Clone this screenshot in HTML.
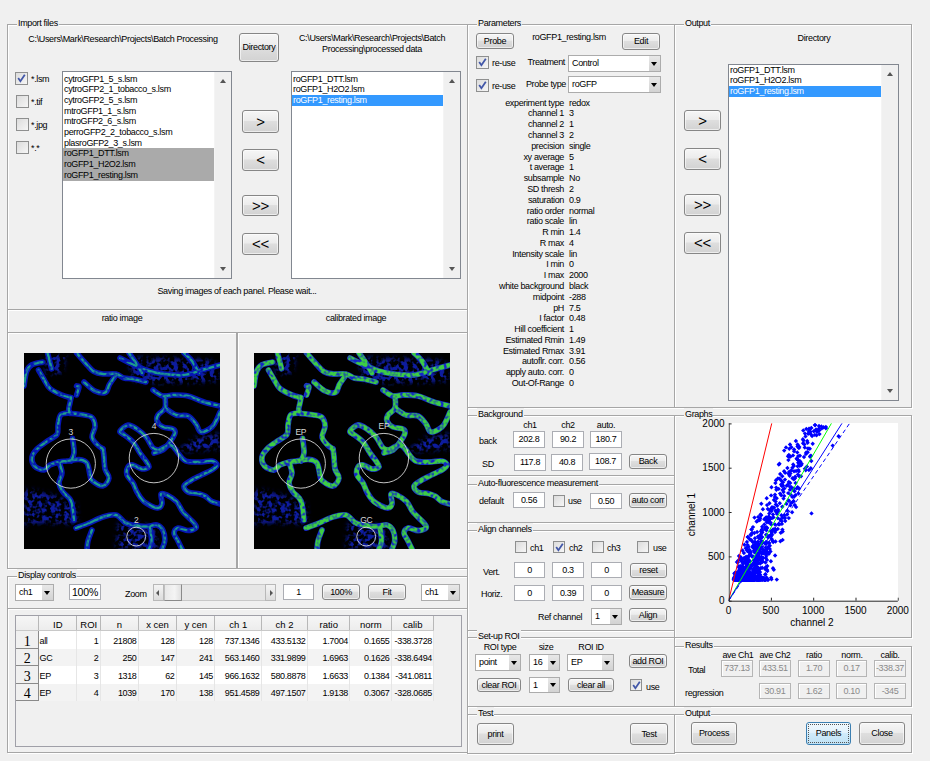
<!DOCTYPE html>
<html><head><meta charset="utf-8"><style>
*{margin:0;padding:0;box-sizing:border-box}
html,body{width:930px;height:761px;overflow:hidden;background:#f0f0f0}
body{position:relative;font-family:"Liberation Sans",sans-serif;font-size:9px;letter-spacing:-0.35px;color:#000}
div{position:absolute}
.t{white-space:pre;line-height:10px}
.fr{border:1px solid #a6a6a6;box-shadow:inset 1px 1px 0 #fff, 1px 1px 0 #fff}
.ft{background:#f0f0f0;padding:0 1px;line-height:12px;white-space:pre}
.btn{border:1px solid #868686;border-radius:3px;background:linear-gradient(#f6f6f6 0%,#ececec 45%,#dedede 50%,#d2d2d2 100%);text-align:center;white-space:pre;box-shadow:inset 0 0 0 1px rgba(255,255,255,.6)}
.btnf{border:1px solid #3c7fb1;border-radius:3px;background:linear-gradient(#f0f8fd 0%,#e2f2fc 45%,#d0ebfa 50%,#c0e2f5 100%);text-align:center;white-space:pre;outline:1px dotted #555;outline-offset:-3px}
.ed{border:1px solid #abadb3;background:#fff;white-space:pre}
.edd{border:1px solid #b5b5b5;background:#f0f0f0;color:#8a8a8a;white-space:pre;box-shadow:inset 1px 1px 0 #fff}
.pp{border:1px solid #acacac;background:#fff;white-space:pre}
.pa{right:0;top:0;bottom:0;width:11px;background:linear-gradient(#e8e8e8,#d2d2d2)}
.tri{left:2px;top:50%;margin-top:-2px;width:0;height:0;border-left:3.5px solid transparent;border-right:3.5px solid transparent;border-top:4px solid #000}
.cb{border:1px solid #8e8f8f;background:linear-gradient(135deg,#dcdcdc,#f6f6f6)}
.lb{border:1px solid #828790;background:#fff;overflow:hidden}
.li{left:0;height:11px;line-height:10px;padding-left:1px;white-space:pre}
.sb{background:#f0f0f0;border-left:1px solid #f4f4f4}
.tru{width:0;height:0;border-left:3.5px solid transparent;border-right:3.5px solid transparent;border-bottom:4px solid #555}
.trd{width:0;height:0;border-left:3.5px solid transparent;border-right:3.5px solid transparent;border-top:4px solid #555}
</style></head>
<body>
<div class="fr" style="left:7px;top:24px;width:461px;height:286px"></div>
<div class="ft" style="left:17px;top:17px">Import files</div>
<div class="t" style="top:34px;left:-27px;width:300px;text-align:center;">C:\Users\Mark\Research\Projects\Batch Processing</div>
<div class="btn" style="left:239px;top:33px;width:40px;height:29px;line-height:27px;">Directory</div>
<div class="t" style="top:33px;left:222px;width:300px;text-align:center;">C:\Users\Mark\Research\Projects\Batch</div>
<div class="t" style="top:44px;left:222px;width:300px;text-align:center;">Processing\processed data</div>
<div class="cb" style="left:15px;top:72px;width:13px;height:13px"><svg width="13" height="13" style="position:absolute;left:-1px;top:-1px" viewBox="0 0 13 13"><path d="M3.2 6 L5.4 9.2 L9.8 2.8" stroke="#4257a8" stroke-width="1.8" fill="none"/></svg></div>
<div class="t" style="top:74px;left:31px;">*.lsm</div>
<div class="cb" style="left:16px;top:95px;width:13px;height:13px"></div>
<div class="t" style="top:97px;left:31px;">*.tif</div>
<div class="cb" style="left:16px;top:118px;width:13px;height:13px"></div>
<div class="t" style="top:120px;left:31px;">*.jpg</div>
<div class="cb" style="left:16px;top:141px;width:13px;height:13px"></div>
<div class="t" style="top:143px;left:31px;">*.*</div>
<div class="lb" style="left:62px;top:71px;width:170px;height:208px">
<div class="li" style="top:1.50px;width:151px">cytroGFP1_5_s.lsm</div>
<div class="li" style="top:12.19px;width:151px">cytroGFP2_1_tobacco_s.lsm</div>
<div class="li" style="top:22.88px;width:151px">cytroGFP2_5_s.lsm</div>
<div class="li" style="top:33.57px;width:151px">mtroGFP1_1_s.lsm</div>
<div class="li" style="top:44.26px;width:151px">mtroGFP2_6_s.lsm</div>
<div class="li" style="top:54.95px;width:151px">perroGFP2_2_tobacco_s.lsm</div>
<div class="li" style="top:65.64px;width:151px">plasroGFP2_3_s.lsm</div>
<div class="li" style="top:76.33px;width:151px;background:#aaaaaa;color:#000">roGFP1_DTT.lsm</div>
<div class="li" style="top:87.02px;width:151px;background:#aaaaaa;color:#000">roGFP1_H2O2.lsm</div>
<div class="li" style="top:97.71px;width:151px;background:#aaaaaa;color:#000">roGFP1_resting.lsm</div>
<div class="sb" style="left:151px;top:0;width:17px;height:206px"><div class="tru" style="left:5px;top:7px"></div><div class="trd" style="left:5px;top:195px"></div></div>
</div>
<div class="btn" style="left:242px;top:110px;width:37px;height:23px;line-height:21px;font-size:15px;">&gt;</div>
<div class="btn" style="left:242px;top:149px;width:37px;height:22px;line-height:20px;font-size:15px;">&lt;</div>
<div class="btn" style="left:242px;top:195px;width:37px;height:21px;line-height:19px;font-size:15px;">&gt;&gt;</div>
<div class="btn" style="left:242px;top:233px;width:37px;height:22px;line-height:20px;font-size:15px;">&lt;&lt;</div>
<div class="lb" style="left:291px;top:71px;width:170px;height:208px">
<div class="li" style="top:1.50px;width:151px">roGFP1_DTT.lsm</div>
<div class="li" style="top:12.19px;width:151px">roGFP1_H2O2.lsm</div>
<div class="li" style="top:22.88px;width:151px;background:#3399ff;color:#fff">roGFP1_resting.lsm</div>
<div class="sb" style="left:151px;top:0;width:17px;height:206px"><div class="tru" style="left:5px;top:7px"></div><div class="trd" style="left:5px;top:195px"></div></div>
</div>
<div class="t" style="top:286px;left:87px;width:300px;text-align:center;">Saving images of each panel. Please wait...</div>
<div class="fr" style="left:7px;top:309px;width:461px;height:24px"></div>
<div class="t" style="top:313px;left:-28px;width:300px;text-align:center;">ratio image</div>
<div class="t" style="top:313px;left:206px;width:300px;text-align:center;">calibrated image</div>
<div class="fr" style="left:7px;top:332px;width:230px;height:237px"></div>
<div class="fr" style="left:237px;top:332px;width:231px;height:237px"></div>
<svg style="position:absolute;left:24px;top:353px" width="196" height="196" viewBox="0 0 196 196"><defs><filter id="f1" x="0" y="0" width="196" height="196" filterUnits="userSpaceOnUse"><feTurbulence type="fractalNoise" baseFrequency="0.22" numOctaves="2" seed="4" result="n"/><feColorMatrix in="n" type="matrix" values="0 0 0 0 0  0 0 0 0 0  0 0 0 0 0  0 0 0 5 -2.15" result="m"/><feGaussianBlur in="SourceGraphic" stdDeviation="2.5" result="bl"/><feComposite in="bl" in2="m" operator="in"/></filter><filter id="f1b" x="0" y="0" width="196" height="196" filterUnits="userSpaceOnUse"><feTurbulence type="fractalNoise" baseFrequency="0.3" numOctaves="1" seed="9" result="n"/><feColorMatrix in="n" type="matrix" values="0 0 0 0 0  0 0 0 0 0  0 0 0 0 0  0 0 0 4 -1.2" result="m"/><feComposite in="SourceGraphic" in2="m" operator="in"/></filter></defs><rect width="196" height="196" fill="#000"/><g fill="#0e1aa0" filter="url(#f1)"><path d="M0,136 C20,138 40,146 52,150 L54,170 C35,172 15,168 0,172 Z"/><path d="M104,4 C130,6 160,4 190,8 L196,28 C170,30 130,32 108,28 Z"/><path d="M94,170 C105,168 125,170 132,176 L134,196 L92,196 Z"/><path d="M20,0 L42,0 L38,20 L22,22 Z"/><path d="M150,100 L196,96 L196,80 L170,85 Z"/></g><g stroke="#0616b4" stroke-width="5.6" fill="none" stroke-linecap="round" stroke-linejoin="round"><path d="M0,33 C0.4,30.6 1.3,21.9 2.6,18.4 C3.9,14.9 5.3,13.3 7.9,11.8 C10.5,10.3 16.6,9.6 18.4,9.2"/><path d="M23.6,0 C24.3,2.6 26.9,13.2 27.6,15.8"/><path d="M14.5,17 C15.4,18.5 17.8,22.9 19.7,26 C21.6,29.1 22.9,32.8 26,35.5 C29.1,38.2 34.5,40.5 38,42 C41.5,43.5 45.5,44.2 47,44.7"/><path d="M52.6,0 C54.1,1.8 59.0,7.4 61.8,10.5 C64.6,13.6 66.8,16.6 69.6,18.4 C72.4,20.1 75.1,20.6 78.8,21 C82.5,21.4 88.5,20.3 92,21 C95.5,21.7 97.2,24.2 100,25 C102.8,25.8 105.3,25.3 109,26 C112.7,26.7 119.8,28.5 122,29"/><path d="M60,29 C61.8,30.5 67.4,36.3 71,38 C74.6,39.7 79.1,40.5 81.5,39.4 C83.9,38.3 83.7,34.4 85.4,31.5 C87.2,28.6 90.9,23.6 92,22"/><path d="M47,44.7 C46.8,45.6 46.4,48.0 46,50 C45.6,52.0 44.7,54.8 44.7,56.5 C44.7,58.2 45.8,59.4 46,60"/><path d="M52.6,32.9 C53.0,33.1 55.0,32.5 55,34 C55.0,35.5 53.0,40.7 52.6,42"/><path d="M46,60 C44.5,60.3 38.8,59.8 36.8,61.8 C34.8,63.8 34.6,68.7 34,72 C33.4,75.3 34.9,78.7 32.9,81.5 C30.9,84.3 25.3,86.6 22,89 C18.7,91.4 15.3,93.5 13,96 C10.7,98.5 8.4,101.2 8,104 C7.6,106.8 8.5,110.8 10.5,113 C12.5,115.2 17.4,117.2 20,117 C22.6,116.8 23.5,113.3 26,112 C28.5,110.7 32.2,109.7 35,109 C37.8,108.3 39.7,108.4 43,108 C46.3,107.6 51.7,106.2 55,106.5 C58.3,106.8 61.2,107.4 63,110 C64.8,112.6 65.2,119.1 66,122 C66.8,124.9 65.8,125.7 68,127.5 C70.2,129.3 76.2,133.4 79,133 C81.8,132.6 84.7,127.8 85,125 C85.3,122.2 81.8,119.5 81,116 C80.2,112.5 80.3,107.3 80,104 C79.7,100.7 79.2,97.3 79,96"/><path d="M46,60.4 C48.2,60.6 55.3,61.1 59,61.8 C62.7,62.5 66.0,62.4 68,64.4 C70.0,66.4 71.0,70.3 71,73.6 C71.0,76.9 67.6,80.9 68,84 C68.4,87.1 71.8,90.0 73.6,92 C75.4,94.0 78.1,95.3 79,96"/><path d="M48.6,85.4 C48.8,87.8 50.3,96.2 50,100 C49.7,103.8 47.5,106.7 47,108"/><path d="M35,109 C35.5,110.8 38.0,116.5 38,120 C38.0,123.5 34.8,126.8 35,130 C35.2,133.2 37.0,136.0 39,139 C41.0,142.0 45.2,143.3 47,148 C48.8,152.7 49.5,163.8 50,167"/><path d="M52,175 C53.8,174.3 58.5,172.8 63,171 C67.5,169.2 74.2,165.5 79,164 C83.8,162.5 88.3,161.1 92,162 C95.7,162.9 98.2,167.9 101,169.6 C103.8,171.3 105.5,171.3 109,172 C112.5,172.7 118.0,173.5 122,173.5 C126.0,173.5 130.2,171.3 133,172 C135.8,172.7 137.7,174.8 139,177.5 C140.3,180.2 140.9,184.9 140.7,188 C140.5,191.1 138.4,194.7 138,196"/><path d="M68,177 C67.3,178.8 64.8,184.8 64,188 C63.2,191.2 63.2,194.7 63,196"/><path d="M126,175 C126.2,177.2 127.7,184.5 127.5,188 C127.3,191.5 125.4,194.7 125,196"/><path d="M129,37 C130.7,38.0 135.7,42.2 139,43 C142.3,43.8 144.8,42.0 149,42 C153.2,42.0 158.8,41.8 164,43 C169.2,44.2 174.7,47.3 180,49 C185.3,50.7 193.3,52.3 196,53"/><path d="M141,43 C141.0,45.0 142.2,51.8 141,55 C139.8,58.2 135.3,59.8 134,62 C132.7,64.2 132.2,66.0 133,68 C133.8,70.0 136.3,72.7 139,74 C141.7,75.3 147.0,75.0 149,76 C151.0,77.0 151.5,77.8 151,80 C150.5,82.2 148.0,86.2 146,89 C144.0,91.8 141.7,95.2 139,97 C136.3,98.8 131.5,99.5 130,100"/><path d="M141,55 C142.8,56.2 148.2,60.7 152,62 C155.8,63.3 160.7,61.5 164,63 C167.3,64.5 169.8,68.3 172,71 C174.2,73.7 174.3,78.5 177,79 C179.7,79.5 185.3,76.2 188,74 C190.7,71.8 191.7,68.5 193,66 C194.3,63.5 195.5,60.2 196,59"/><path d="M99,81 C98.5,80.5 95.2,79.5 96,78 C96.8,76.5 101.2,72.3 104,72 C106.8,71.7 110.0,74.0 113,76 C116.0,78.0 119.3,80.8 122,84 C124.7,87.2 126.8,92.8 129,95 C131.2,97.2 134.0,96.7 135,97"/><path d="M99,81 C100.7,82.3 106.2,85.8 109,89 C111.8,92.2 113.8,96.8 116,100 C118.2,103.2 120.5,105.7 122,108 C123.5,110.3 125.7,112.7 125,114 C124.3,115.3 120.7,116.3 118,116 C115.3,115.7 111.3,112.3 109,112 C106.7,111.7 105.0,112.3 104,114 C103.0,115.7 102.2,119.3 103,122 C103.8,124.7 107.3,127.2 109,130 C110.7,132.8 111.2,135.9 113,139 C114.8,142.1 116.7,145.9 120,148.6 C123.3,151.3 130.0,154.6 133,155 C136.0,155.4 137.3,153.3 138,151 C138.7,148.7 136.2,142.5 137,141 C137.8,139.5 140.4,140.7 143,142 C145.6,143.3 149.8,145.8 152.5,148.6 C155.2,151.4 156.2,155.5 159,159 C161.8,162.5 167.4,166.9 169.6,169.6 C171.8,172.3 172.9,173.7 172,175 C171.1,176.3 167.0,177.5 164,177.5 C161.0,177.5 156.3,174.6 154,175 C151.7,175.4 150.0,177.8 150,180 C150.0,182.2 152.7,185.3 154,188 C155.3,190.7 157.3,194.7 158,196"/><path d="M135,97 C136.8,96.2 143.2,92.0 146,92 C148.8,92.0 150.7,95.7 152,97 C153.3,98.3 152.4,98.2 154,100 C155.6,101.8 158.2,106.5 161.7,108 C165.2,109.5 170.6,109.0 175,109 C179.4,109.0 185.0,107.5 188,108 C191.0,108.5 193.0,110.5 193,112 C193.0,113.5 190.6,115.3 188,117 C185.4,118.7 181.0,120.2 177.5,122 C174.0,123.8 169.9,125.7 167,127.5 C164.1,129.3 160.5,131.1 160,133 C159.5,134.9 161.5,137.7 164,139 C166.5,140.3 172.2,140.0 175,140.7 C177.8,141.4 178.8,141.7 181,143 C183.2,144.3 185.5,147.3 188,148.6 C190.5,149.9 194.7,150.6 196,151"/><path d="M96,5 C98.3,6.2 105.2,9.8 110,12 C114.8,14.2 120.0,16.5 125,18 C130.0,19.5 134.2,20.3 140,21 C145.8,21.7 153.7,22.7 160,22 C166.3,21.3 172.0,18.7 178,17 C184.0,15.3 193.0,12.8 196,12"/><path d="M105,0 C106.2,1.7 109.8,6.7 112,10 C114.2,13.3 117.0,18.3 118,20"/><path d="M160,0 C161.3,1.3 165.5,4.7 168,8 C170.5,11.3 173.8,18.0 175,20"/></g><g stroke="#1e9c8c" stroke-width="2.4" fill="none" stroke-linecap="round" stroke-linejoin="round" filter="url(#f1b)"><path d="M0,33 C0.4,30.6 1.3,21.9 2.6,18.4 C3.9,14.9 5.3,13.3 7.9,11.8 C10.5,10.3 16.6,9.6 18.4,9.2"/><path d="M23.6,0 C24.3,2.6 26.9,13.2 27.6,15.8"/><path d="M14.5,17 C15.4,18.5 17.8,22.9 19.7,26 C21.6,29.1 22.9,32.8 26,35.5 C29.1,38.2 34.5,40.5 38,42 C41.5,43.5 45.5,44.2 47,44.7"/><path d="M52.6,0 C54.1,1.8 59.0,7.4 61.8,10.5 C64.6,13.6 66.8,16.6 69.6,18.4 C72.4,20.1 75.1,20.6 78.8,21 C82.5,21.4 88.5,20.3 92,21 C95.5,21.7 97.2,24.2 100,25 C102.8,25.8 105.3,25.3 109,26 C112.7,26.7 119.8,28.5 122,29"/><path d="M60,29 C61.8,30.5 67.4,36.3 71,38 C74.6,39.7 79.1,40.5 81.5,39.4 C83.9,38.3 83.7,34.4 85.4,31.5 C87.2,28.6 90.9,23.6 92,22"/><path d="M47,44.7 C46.8,45.6 46.4,48.0 46,50 C45.6,52.0 44.7,54.8 44.7,56.5 C44.7,58.2 45.8,59.4 46,60"/><path d="M52.6,32.9 C53.0,33.1 55.0,32.5 55,34 C55.0,35.5 53.0,40.7 52.6,42"/><path d="M46,60 C44.5,60.3 38.8,59.8 36.8,61.8 C34.8,63.8 34.6,68.7 34,72 C33.4,75.3 34.9,78.7 32.9,81.5 C30.9,84.3 25.3,86.6 22,89 C18.7,91.4 15.3,93.5 13,96 C10.7,98.5 8.4,101.2 8,104 C7.6,106.8 8.5,110.8 10.5,113 C12.5,115.2 17.4,117.2 20,117 C22.6,116.8 23.5,113.3 26,112 C28.5,110.7 32.2,109.7 35,109 C37.8,108.3 39.7,108.4 43,108 C46.3,107.6 51.7,106.2 55,106.5 C58.3,106.8 61.2,107.4 63,110 C64.8,112.6 65.2,119.1 66,122 C66.8,124.9 65.8,125.7 68,127.5 C70.2,129.3 76.2,133.4 79,133 C81.8,132.6 84.7,127.8 85,125 C85.3,122.2 81.8,119.5 81,116 C80.2,112.5 80.3,107.3 80,104 C79.7,100.7 79.2,97.3 79,96"/><path d="M46,60.4 C48.2,60.6 55.3,61.1 59,61.8 C62.7,62.5 66.0,62.4 68,64.4 C70.0,66.4 71.0,70.3 71,73.6 C71.0,76.9 67.6,80.9 68,84 C68.4,87.1 71.8,90.0 73.6,92 C75.4,94.0 78.1,95.3 79,96"/><path d="M48.6,85.4 C48.8,87.8 50.3,96.2 50,100 C49.7,103.8 47.5,106.7 47,108"/><path d="M35,109 C35.5,110.8 38.0,116.5 38,120 C38.0,123.5 34.8,126.8 35,130 C35.2,133.2 37.0,136.0 39,139 C41.0,142.0 45.2,143.3 47,148 C48.8,152.7 49.5,163.8 50,167"/><path d="M52,175 C53.8,174.3 58.5,172.8 63,171 C67.5,169.2 74.2,165.5 79,164 C83.8,162.5 88.3,161.1 92,162 C95.7,162.9 98.2,167.9 101,169.6 C103.8,171.3 105.5,171.3 109,172 C112.5,172.7 118.0,173.5 122,173.5 C126.0,173.5 130.2,171.3 133,172 C135.8,172.7 137.7,174.8 139,177.5 C140.3,180.2 140.9,184.9 140.7,188 C140.5,191.1 138.4,194.7 138,196"/><path d="M68,177 C67.3,178.8 64.8,184.8 64,188 C63.2,191.2 63.2,194.7 63,196"/><path d="M126,175 C126.2,177.2 127.7,184.5 127.5,188 C127.3,191.5 125.4,194.7 125,196"/><path d="M129,37 C130.7,38.0 135.7,42.2 139,43 C142.3,43.8 144.8,42.0 149,42 C153.2,42.0 158.8,41.8 164,43 C169.2,44.2 174.7,47.3 180,49 C185.3,50.7 193.3,52.3 196,53"/><path d="M141,43 C141.0,45.0 142.2,51.8 141,55 C139.8,58.2 135.3,59.8 134,62 C132.7,64.2 132.2,66.0 133,68 C133.8,70.0 136.3,72.7 139,74 C141.7,75.3 147.0,75.0 149,76 C151.0,77.0 151.5,77.8 151,80 C150.5,82.2 148.0,86.2 146,89 C144.0,91.8 141.7,95.2 139,97 C136.3,98.8 131.5,99.5 130,100"/><path d="M141,55 C142.8,56.2 148.2,60.7 152,62 C155.8,63.3 160.7,61.5 164,63 C167.3,64.5 169.8,68.3 172,71 C174.2,73.7 174.3,78.5 177,79 C179.7,79.5 185.3,76.2 188,74 C190.7,71.8 191.7,68.5 193,66 C194.3,63.5 195.5,60.2 196,59"/><path d="M99,81 C98.5,80.5 95.2,79.5 96,78 C96.8,76.5 101.2,72.3 104,72 C106.8,71.7 110.0,74.0 113,76 C116.0,78.0 119.3,80.8 122,84 C124.7,87.2 126.8,92.8 129,95 C131.2,97.2 134.0,96.7 135,97"/><path d="M99,81 C100.7,82.3 106.2,85.8 109,89 C111.8,92.2 113.8,96.8 116,100 C118.2,103.2 120.5,105.7 122,108 C123.5,110.3 125.7,112.7 125,114 C124.3,115.3 120.7,116.3 118,116 C115.3,115.7 111.3,112.3 109,112 C106.7,111.7 105.0,112.3 104,114 C103.0,115.7 102.2,119.3 103,122 C103.8,124.7 107.3,127.2 109,130 C110.7,132.8 111.2,135.9 113,139 C114.8,142.1 116.7,145.9 120,148.6 C123.3,151.3 130.0,154.6 133,155 C136.0,155.4 137.3,153.3 138,151 C138.7,148.7 136.2,142.5 137,141 C137.8,139.5 140.4,140.7 143,142 C145.6,143.3 149.8,145.8 152.5,148.6 C155.2,151.4 156.2,155.5 159,159 C161.8,162.5 167.4,166.9 169.6,169.6 C171.8,172.3 172.9,173.7 172,175 C171.1,176.3 167.0,177.5 164,177.5 C161.0,177.5 156.3,174.6 154,175 C151.7,175.4 150.0,177.8 150,180 C150.0,182.2 152.7,185.3 154,188 C155.3,190.7 157.3,194.7 158,196"/><path d="M135,97 C136.8,96.2 143.2,92.0 146,92 C148.8,92.0 150.7,95.7 152,97 C153.3,98.3 152.4,98.2 154,100 C155.6,101.8 158.2,106.5 161.7,108 C165.2,109.5 170.6,109.0 175,109 C179.4,109.0 185.0,107.5 188,108 C191.0,108.5 193.0,110.5 193,112 C193.0,113.5 190.6,115.3 188,117 C185.4,118.7 181.0,120.2 177.5,122 C174.0,123.8 169.9,125.7 167,127.5 C164.1,129.3 160.5,131.1 160,133 C159.5,134.9 161.5,137.7 164,139 C166.5,140.3 172.2,140.0 175,140.7 C177.8,141.4 178.8,141.7 181,143 C183.2,144.3 185.5,147.3 188,148.6 C190.5,149.9 194.7,150.6 196,151"/><path d="M96,5 C98.3,6.2 105.2,9.8 110,12 C114.8,14.2 120.0,16.5 125,18 C130.0,19.5 134.2,20.3 140,21 C145.8,21.7 153.7,22.7 160,22 C166.3,21.3 172.0,18.7 178,17 C184.0,15.3 193.0,12.8 196,12"/><path d="M105,0 C106.2,1.7 109.8,6.7 112,10 C114.2,13.3 117.0,18.3 118,20"/><path d="M160,0 C161.3,1.3 165.5,4.7 168,8 C170.5,11.3 173.8,18.0 175,20"/></g><circle cx="46.8" cy="110.6" r="24.6" stroke="#d8d8d8" stroke-width="0.9" fill="none"/><circle cx="129.9" cy="105.1" r="24.7" stroke="#d8d8d8" stroke-width="0.9" fill="none"/><circle cx="112.2" cy="183.6" r="9.4" stroke="#d8d8d8" stroke-width="0.9" fill="none"/><text x="46.8" y="82" fill="#d8d8d8" font-size="8.5" text-anchor="middle" font-family="Liberation Sans">3</text><text x="129.9" y="76" fill="#d8d8d8" font-size="8.5" text-anchor="middle" font-family="Liberation Sans">4</text><text x="112.2" y="170" fill="#d8d8d8" font-size="8.5" text-anchor="middle" font-family="Liberation Sans">2</text></svg>
<svg style="position:absolute;left:254px;top:353px" width="196" height="196" viewBox="0 0 196 196"><defs><filter id="f2" x="0" y="0" width="196" height="196" filterUnits="userSpaceOnUse"><feTurbulence type="fractalNoise" baseFrequency="0.22" numOctaves="2" seed="4" result="n"/><feColorMatrix in="n" type="matrix" values="0 0 0 0 0  0 0 0 0 0  0 0 0 0 0  0 0 0 5 -2.15" result="m"/><feGaussianBlur in="SourceGraphic" stdDeviation="2.5" result="bl"/><feComposite in="bl" in2="m" operator="in"/></filter><filter id="f2b" x="0" y="0" width="196" height="196" filterUnits="userSpaceOnUse"><feTurbulence type="fractalNoise" baseFrequency="0.3" numOctaves="1" seed="9" result="n"/><feColorMatrix in="n" type="matrix" values="0 0 0 0 0  0 0 0 0 0  0 0 0 0 0  0 0 0 4 -1.2" result="m"/><feComposite in="SourceGraphic" in2="m" operator="in"/></filter></defs><rect width="196" height="196" fill="#000"/><g fill="#0e1aa0" filter="url(#f2)"><path d="M0,136 C20,138 40,146 52,150 L54,170 C35,172 15,168 0,172 Z"/><path d="M104,4 C130,6 160,4 190,8 L196,28 C170,30 130,32 108,28 Z"/><path d="M94,170 C105,168 125,170 132,176 L134,196 L92,196 Z"/><path d="M20,0 L42,0 L38,20 L22,22 Z"/><path d="M150,100 L196,96 L196,80 L170,85 Z"/></g><g stroke="#1428c8" stroke-width="5.8" fill="none" stroke-linecap="round" stroke-linejoin="round"><path d="M0,33 C0.4,30.6 1.3,21.9 2.6,18.4 C3.9,14.9 5.3,13.3 7.9,11.8 C10.5,10.3 16.6,9.6 18.4,9.2"/><path d="M23.6,0 C24.3,2.6 26.9,13.2 27.6,15.8"/><path d="M14.5,17 C15.4,18.5 17.8,22.9 19.7,26 C21.6,29.1 22.9,32.8 26,35.5 C29.1,38.2 34.5,40.5 38,42 C41.5,43.5 45.5,44.2 47,44.7"/><path d="M52.6,0 C54.1,1.8 59.0,7.4 61.8,10.5 C64.6,13.6 66.8,16.6 69.6,18.4 C72.4,20.1 75.1,20.6 78.8,21 C82.5,21.4 88.5,20.3 92,21 C95.5,21.7 97.2,24.2 100,25 C102.8,25.8 105.3,25.3 109,26 C112.7,26.7 119.8,28.5 122,29"/><path d="M60,29 C61.8,30.5 67.4,36.3 71,38 C74.6,39.7 79.1,40.5 81.5,39.4 C83.9,38.3 83.7,34.4 85.4,31.5 C87.2,28.6 90.9,23.6 92,22"/><path d="M47,44.7 C46.8,45.6 46.4,48.0 46,50 C45.6,52.0 44.7,54.8 44.7,56.5 C44.7,58.2 45.8,59.4 46,60"/><path d="M52.6,32.9 C53.0,33.1 55.0,32.5 55,34 C55.0,35.5 53.0,40.7 52.6,42"/><path d="M46,60 C44.5,60.3 38.8,59.8 36.8,61.8 C34.8,63.8 34.6,68.7 34,72 C33.4,75.3 34.9,78.7 32.9,81.5 C30.9,84.3 25.3,86.6 22,89 C18.7,91.4 15.3,93.5 13,96 C10.7,98.5 8.4,101.2 8,104 C7.6,106.8 8.5,110.8 10.5,113 C12.5,115.2 17.4,117.2 20,117 C22.6,116.8 23.5,113.3 26,112 C28.5,110.7 32.2,109.7 35,109 C37.8,108.3 39.7,108.4 43,108 C46.3,107.6 51.7,106.2 55,106.5 C58.3,106.8 61.2,107.4 63,110 C64.8,112.6 65.2,119.1 66,122 C66.8,124.9 65.8,125.7 68,127.5 C70.2,129.3 76.2,133.4 79,133 C81.8,132.6 84.7,127.8 85,125 C85.3,122.2 81.8,119.5 81,116 C80.2,112.5 80.3,107.3 80,104 C79.7,100.7 79.2,97.3 79,96"/><path d="M46,60.4 C48.2,60.6 55.3,61.1 59,61.8 C62.7,62.5 66.0,62.4 68,64.4 C70.0,66.4 71.0,70.3 71,73.6 C71.0,76.9 67.6,80.9 68,84 C68.4,87.1 71.8,90.0 73.6,92 C75.4,94.0 78.1,95.3 79,96"/><path d="M48.6,85.4 C48.8,87.8 50.3,96.2 50,100 C49.7,103.8 47.5,106.7 47,108"/><path d="M35,109 C35.5,110.8 38.0,116.5 38,120 C38.0,123.5 34.8,126.8 35,130 C35.2,133.2 37.0,136.0 39,139 C41.0,142.0 45.2,143.3 47,148 C48.8,152.7 49.5,163.8 50,167"/><path d="M52,175 C53.8,174.3 58.5,172.8 63,171 C67.5,169.2 74.2,165.5 79,164 C83.8,162.5 88.3,161.1 92,162 C95.7,162.9 98.2,167.9 101,169.6 C103.8,171.3 105.5,171.3 109,172 C112.5,172.7 118.0,173.5 122,173.5 C126.0,173.5 130.2,171.3 133,172 C135.8,172.7 137.7,174.8 139,177.5 C140.3,180.2 140.9,184.9 140.7,188 C140.5,191.1 138.4,194.7 138,196"/><path d="M68,177 C67.3,178.8 64.8,184.8 64,188 C63.2,191.2 63.2,194.7 63,196"/><path d="M126,175 C126.2,177.2 127.7,184.5 127.5,188 C127.3,191.5 125.4,194.7 125,196"/><path d="M129,37 C130.7,38.0 135.7,42.2 139,43 C142.3,43.8 144.8,42.0 149,42 C153.2,42.0 158.8,41.8 164,43 C169.2,44.2 174.7,47.3 180,49 C185.3,50.7 193.3,52.3 196,53"/><path d="M141,43 C141.0,45.0 142.2,51.8 141,55 C139.8,58.2 135.3,59.8 134,62 C132.7,64.2 132.2,66.0 133,68 C133.8,70.0 136.3,72.7 139,74 C141.7,75.3 147.0,75.0 149,76 C151.0,77.0 151.5,77.8 151,80 C150.5,82.2 148.0,86.2 146,89 C144.0,91.8 141.7,95.2 139,97 C136.3,98.8 131.5,99.5 130,100"/><path d="M141,55 C142.8,56.2 148.2,60.7 152,62 C155.8,63.3 160.7,61.5 164,63 C167.3,64.5 169.8,68.3 172,71 C174.2,73.7 174.3,78.5 177,79 C179.7,79.5 185.3,76.2 188,74 C190.7,71.8 191.7,68.5 193,66 C194.3,63.5 195.5,60.2 196,59"/><path d="M99,81 C98.5,80.5 95.2,79.5 96,78 C96.8,76.5 101.2,72.3 104,72 C106.8,71.7 110.0,74.0 113,76 C116.0,78.0 119.3,80.8 122,84 C124.7,87.2 126.8,92.8 129,95 C131.2,97.2 134.0,96.7 135,97"/><path d="M99,81 C100.7,82.3 106.2,85.8 109,89 C111.8,92.2 113.8,96.8 116,100 C118.2,103.2 120.5,105.7 122,108 C123.5,110.3 125.7,112.7 125,114 C124.3,115.3 120.7,116.3 118,116 C115.3,115.7 111.3,112.3 109,112 C106.7,111.7 105.0,112.3 104,114 C103.0,115.7 102.2,119.3 103,122 C103.8,124.7 107.3,127.2 109,130 C110.7,132.8 111.2,135.9 113,139 C114.8,142.1 116.7,145.9 120,148.6 C123.3,151.3 130.0,154.6 133,155 C136.0,155.4 137.3,153.3 138,151 C138.7,148.7 136.2,142.5 137,141 C137.8,139.5 140.4,140.7 143,142 C145.6,143.3 149.8,145.8 152.5,148.6 C155.2,151.4 156.2,155.5 159,159 C161.8,162.5 167.4,166.9 169.6,169.6 C171.8,172.3 172.9,173.7 172,175 C171.1,176.3 167.0,177.5 164,177.5 C161.0,177.5 156.3,174.6 154,175 C151.7,175.4 150.0,177.8 150,180 C150.0,182.2 152.7,185.3 154,188 C155.3,190.7 157.3,194.7 158,196"/><path d="M135,97 C136.8,96.2 143.2,92.0 146,92 C148.8,92.0 150.7,95.7 152,97 C153.3,98.3 152.4,98.2 154,100 C155.6,101.8 158.2,106.5 161.7,108 C165.2,109.5 170.6,109.0 175,109 C179.4,109.0 185.0,107.5 188,108 C191.0,108.5 193.0,110.5 193,112 C193.0,113.5 190.6,115.3 188,117 C185.4,118.7 181.0,120.2 177.5,122 C174.0,123.8 169.9,125.7 167,127.5 C164.1,129.3 160.5,131.1 160,133 C159.5,134.9 161.5,137.7 164,139 C166.5,140.3 172.2,140.0 175,140.7 C177.8,141.4 178.8,141.7 181,143 C183.2,144.3 185.5,147.3 188,148.6 C190.5,149.9 194.7,150.6 196,151"/><path d="M96,5 C98.3,6.2 105.2,9.8 110,12 C114.8,14.2 120.0,16.5 125,18 C130.0,19.5 134.2,20.3 140,21 C145.8,21.7 153.7,22.7 160,22 C166.3,21.3 172.0,18.7 178,17 C184.0,15.3 193.0,12.8 196,12"/><path d="M105,0 C106.2,1.7 109.8,6.7 112,10 C114.2,13.3 117.0,18.3 118,20"/><path d="M160,0 C161.3,1.3 165.5,4.7 168,8 C170.5,11.3 173.8,18.0 175,20"/></g><g stroke="#3ccc44" stroke-width="4.6" fill="none" stroke-linecap="round" stroke-linejoin="round" filter="url(#f2b)"><path d="M0,33 C0.4,30.6 1.3,21.9 2.6,18.4 C3.9,14.9 5.3,13.3 7.9,11.8 C10.5,10.3 16.6,9.6 18.4,9.2"/><path d="M23.6,0 C24.3,2.6 26.9,13.2 27.6,15.8"/><path d="M14.5,17 C15.4,18.5 17.8,22.9 19.7,26 C21.6,29.1 22.9,32.8 26,35.5 C29.1,38.2 34.5,40.5 38,42 C41.5,43.5 45.5,44.2 47,44.7"/><path d="M52.6,0 C54.1,1.8 59.0,7.4 61.8,10.5 C64.6,13.6 66.8,16.6 69.6,18.4 C72.4,20.1 75.1,20.6 78.8,21 C82.5,21.4 88.5,20.3 92,21 C95.5,21.7 97.2,24.2 100,25 C102.8,25.8 105.3,25.3 109,26 C112.7,26.7 119.8,28.5 122,29"/><path d="M60,29 C61.8,30.5 67.4,36.3 71,38 C74.6,39.7 79.1,40.5 81.5,39.4 C83.9,38.3 83.7,34.4 85.4,31.5 C87.2,28.6 90.9,23.6 92,22"/><path d="M47,44.7 C46.8,45.6 46.4,48.0 46,50 C45.6,52.0 44.7,54.8 44.7,56.5 C44.7,58.2 45.8,59.4 46,60"/><path d="M52.6,32.9 C53.0,33.1 55.0,32.5 55,34 C55.0,35.5 53.0,40.7 52.6,42"/><path d="M46,60 C44.5,60.3 38.8,59.8 36.8,61.8 C34.8,63.8 34.6,68.7 34,72 C33.4,75.3 34.9,78.7 32.9,81.5 C30.9,84.3 25.3,86.6 22,89 C18.7,91.4 15.3,93.5 13,96 C10.7,98.5 8.4,101.2 8,104 C7.6,106.8 8.5,110.8 10.5,113 C12.5,115.2 17.4,117.2 20,117 C22.6,116.8 23.5,113.3 26,112 C28.5,110.7 32.2,109.7 35,109 C37.8,108.3 39.7,108.4 43,108 C46.3,107.6 51.7,106.2 55,106.5 C58.3,106.8 61.2,107.4 63,110 C64.8,112.6 65.2,119.1 66,122 C66.8,124.9 65.8,125.7 68,127.5 C70.2,129.3 76.2,133.4 79,133 C81.8,132.6 84.7,127.8 85,125 C85.3,122.2 81.8,119.5 81,116 C80.2,112.5 80.3,107.3 80,104 C79.7,100.7 79.2,97.3 79,96"/><path d="M46,60.4 C48.2,60.6 55.3,61.1 59,61.8 C62.7,62.5 66.0,62.4 68,64.4 C70.0,66.4 71.0,70.3 71,73.6 C71.0,76.9 67.6,80.9 68,84 C68.4,87.1 71.8,90.0 73.6,92 C75.4,94.0 78.1,95.3 79,96"/><path d="M48.6,85.4 C48.8,87.8 50.3,96.2 50,100 C49.7,103.8 47.5,106.7 47,108"/><path d="M35,109 C35.5,110.8 38.0,116.5 38,120 C38.0,123.5 34.8,126.8 35,130 C35.2,133.2 37.0,136.0 39,139 C41.0,142.0 45.2,143.3 47,148 C48.8,152.7 49.5,163.8 50,167"/><path d="M52,175 C53.8,174.3 58.5,172.8 63,171 C67.5,169.2 74.2,165.5 79,164 C83.8,162.5 88.3,161.1 92,162 C95.7,162.9 98.2,167.9 101,169.6 C103.8,171.3 105.5,171.3 109,172 C112.5,172.7 118.0,173.5 122,173.5 C126.0,173.5 130.2,171.3 133,172 C135.8,172.7 137.7,174.8 139,177.5 C140.3,180.2 140.9,184.9 140.7,188 C140.5,191.1 138.4,194.7 138,196"/><path d="M68,177 C67.3,178.8 64.8,184.8 64,188 C63.2,191.2 63.2,194.7 63,196"/><path d="M126,175 C126.2,177.2 127.7,184.5 127.5,188 C127.3,191.5 125.4,194.7 125,196"/><path d="M129,37 C130.7,38.0 135.7,42.2 139,43 C142.3,43.8 144.8,42.0 149,42 C153.2,42.0 158.8,41.8 164,43 C169.2,44.2 174.7,47.3 180,49 C185.3,50.7 193.3,52.3 196,53"/><path d="M141,43 C141.0,45.0 142.2,51.8 141,55 C139.8,58.2 135.3,59.8 134,62 C132.7,64.2 132.2,66.0 133,68 C133.8,70.0 136.3,72.7 139,74 C141.7,75.3 147.0,75.0 149,76 C151.0,77.0 151.5,77.8 151,80 C150.5,82.2 148.0,86.2 146,89 C144.0,91.8 141.7,95.2 139,97 C136.3,98.8 131.5,99.5 130,100"/><path d="M141,55 C142.8,56.2 148.2,60.7 152,62 C155.8,63.3 160.7,61.5 164,63 C167.3,64.5 169.8,68.3 172,71 C174.2,73.7 174.3,78.5 177,79 C179.7,79.5 185.3,76.2 188,74 C190.7,71.8 191.7,68.5 193,66 C194.3,63.5 195.5,60.2 196,59"/><path d="M99,81 C98.5,80.5 95.2,79.5 96,78 C96.8,76.5 101.2,72.3 104,72 C106.8,71.7 110.0,74.0 113,76 C116.0,78.0 119.3,80.8 122,84 C124.7,87.2 126.8,92.8 129,95 C131.2,97.2 134.0,96.7 135,97"/><path d="M99,81 C100.7,82.3 106.2,85.8 109,89 C111.8,92.2 113.8,96.8 116,100 C118.2,103.2 120.5,105.7 122,108 C123.5,110.3 125.7,112.7 125,114 C124.3,115.3 120.7,116.3 118,116 C115.3,115.7 111.3,112.3 109,112 C106.7,111.7 105.0,112.3 104,114 C103.0,115.7 102.2,119.3 103,122 C103.8,124.7 107.3,127.2 109,130 C110.7,132.8 111.2,135.9 113,139 C114.8,142.1 116.7,145.9 120,148.6 C123.3,151.3 130.0,154.6 133,155 C136.0,155.4 137.3,153.3 138,151 C138.7,148.7 136.2,142.5 137,141 C137.8,139.5 140.4,140.7 143,142 C145.6,143.3 149.8,145.8 152.5,148.6 C155.2,151.4 156.2,155.5 159,159 C161.8,162.5 167.4,166.9 169.6,169.6 C171.8,172.3 172.9,173.7 172,175 C171.1,176.3 167.0,177.5 164,177.5 C161.0,177.5 156.3,174.6 154,175 C151.7,175.4 150.0,177.8 150,180 C150.0,182.2 152.7,185.3 154,188 C155.3,190.7 157.3,194.7 158,196"/><path d="M135,97 C136.8,96.2 143.2,92.0 146,92 C148.8,92.0 150.7,95.7 152,97 C153.3,98.3 152.4,98.2 154,100 C155.6,101.8 158.2,106.5 161.7,108 C165.2,109.5 170.6,109.0 175,109 C179.4,109.0 185.0,107.5 188,108 C191.0,108.5 193.0,110.5 193,112 C193.0,113.5 190.6,115.3 188,117 C185.4,118.7 181.0,120.2 177.5,122 C174.0,123.8 169.9,125.7 167,127.5 C164.1,129.3 160.5,131.1 160,133 C159.5,134.9 161.5,137.7 164,139 C166.5,140.3 172.2,140.0 175,140.7 C177.8,141.4 178.8,141.7 181,143 C183.2,144.3 185.5,147.3 188,148.6 C190.5,149.9 194.7,150.6 196,151"/><path d="M96,5 C98.3,6.2 105.2,9.8 110,12 C114.8,14.2 120.0,16.5 125,18 C130.0,19.5 134.2,20.3 140,21 C145.8,21.7 153.7,22.7 160,22 C166.3,21.3 172.0,18.7 178,17 C184.0,15.3 193.0,12.8 196,12"/><path d="M105,0 C106.2,1.7 109.8,6.7 112,10 C114.2,13.3 117.0,18.3 118,20"/><path d="M160,0 C161.3,1.3 165.5,4.7 168,8 C170.5,11.3 173.8,18.0 175,20"/></g><circle cx="46.8" cy="110.6" r="24.6" stroke="#d8d8d8" stroke-width="0.9" fill="none"/><circle cx="129.9" cy="105.1" r="24.7" stroke="#d8d8d8" stroke-width="0.9" fill="none"/><circle cx="112.2" cy="183.6" r="9.4" stroke="#d8d8d8" stroke-width="0.9" fill="none"/><text x="46.8" y="82" fill="#d8d8d8" font-size="8.5" text-anchor="middle" font-family="Liberation Sans">EP</text><text x="129.9" y="76" fill="#d8d8d8" font-size="8.5" text-anchor="middle" font-family="Liberation Sans">EP</text><text x="112.2" y="170" fill="#d8d8d8" font-size="8.5" text-anchor="middle" font-family="Liberation Sans">GC</text></svg>
<div class="fr" style="left:7px;top:576px;width:461px;height:33px"></div>
<div class="ft" style="left:17px;top:569px">Display controls</div>
<div class="pp" style="left:15px;top:584px;width:39px;height:17px;line-height:15px"><span style="padding-left:3px">ch1</span><div class="pa"><div class="tri"></div></div></div>
<div class="ed" style="left:69px;top:584px;width:32px;height:16px;line-height:14px;text-align:center;font-size:10.5px;letter-spacing:-0.2px">100%</div>
<div class="t" style="top:589px;left:125px;">Zoom</div>
<div style="left:153px;top:584px;width:123px;height:17px;background:#e6e6e6;border:1px solid #c8c8c8"></div>
<div style="left:153px;top:584px;width:11px;height:17px;background:linear-gradient(#f4f4f4,#dcdcdc);border:1px solid #b8b8b8"><div class="tri" style="left:2px;border-top:3px solid transparent;border-bottom:3px solid transparent;border-right:3px solid #555;border-left:0;margin-top:-3px"></div></div>
<div style="left:164px;top:584px;width:18px;height:17px;background:linear-gradient(90deg,#e8e8e8,#f4f4f4 60%,#e0e0e0);border:1px solid #c0c0c0;border-right:1px solid #8a8a8a;border-bottom:1px solid #8a8a8a"></div>
<div style="left:265px;top:584px;width:11px;height:17px;background:linear-gradient(#f4f4f4,#dcdcdc);border:1px solid #b8b8b8"><div class="tri" style="left:4px;border-top:3px solid transparent;border-bottom:3px solid transparent;border-left:3px solid #555;border-right:0;margin-top:-3px"></div></div>
<div class="ed" style="left:283px;top:584px;width:31px;height:16px;line-height:14px;text-align:center">1</div>
<div class="btn" style="left:322px;top:584px;width:38px;height:16px;line-height:14px;">100%</div>
<div class="btn" style="left:368px;top:584px;width:38px;height:16px;line-height:14px;">Fit</div>
<div class="pp" style="left:421px;top:584px;width:39px;height:17px;line-height:15px"><span style="padding-left:3px">ch1</span><div class="pa"><div class="tri"></div></div></div>
<div class="fr" style="left:7px;top:608px;width:461px;height:145px"></div>
<div style="left:15px;top:615px;width:447px;height:132px;border:1px solid #a0a0a8;background:#f0f0f0"></div>
<div style="left:16px;top:616px;width:418px;height:15px;background:linear-gradient(#f6f6f6,#ececec)"></div>
<div style="left:37.5px;top:616px;width:1px;height:15px;background:#b8b8b8"></div>
<div style="left:76.0px;top:616px;width:1px;height:15px;background:#b8b8b8"></div>
<div class="t" style="left:38.5px;width:38.5px;text-align:center;top:620px;font-size:9.5px;letter-spacing:0">ID</div>
<div style="left:99.5px;top:616px;width:1px;height:15px;background:#b8b8b8"></div>
<div class="t" style="left:77.0px;width:23.5px;text-align:center;top:620px;font-size:9.5px;letter-spacing:0">ROI</div>
<div style="left:137.5px;top:616px;width:1px;height:15px;background:#b8b8b8"></div>
<div class="t" style="left:100.5px;width:38.0px;text-align:center;top:620px;font-size:9.5px;letter-spacing:0">n</div>
<div style="left:175.5px;top:616px;width:1px;height:15px;background:#b8b8b8"></div>
<div class="t" style="left:138.5px;width:38.0px;text-align:center;top:620px;font-size:9.5px;letter-spacing:0">x cen</div>
<div style="left:214.0px;top:616px;width:1px;height:15px;background:#b8b8b8"></div>
<div class="t" style="left:176.5px;width:38.5px;text-align:center;top:620px;font-size:9.5px;letter-spacing:0">y cen</div>
<div style="left:260.5px;top:616px;width:1px;height:15px;background:#b8b8b8"></div>
<div class="t" style="left:215.0px;width:46.5px;text-align:center;top:620px;font-size:9.5px;letter-spacing:0">ch 1</div>
<div style="left:306.5px;top:616px;width:1px;height:15px;background:#b8b8b8"></div>
<div class="t" style="left:261.5px;width:46.0px;text-align:center;top:620px;font-size:9.5px;letter-spacing:0">ch 2</div>
<div style="left:349.0px;top:616px;width:1px;height:15px;background:#b8b8b8"></div>
<div class="t" style="left:307.5px;width:42.5px;text-align:center;top:620px;font-size:9.5px;letter-spacing:0">ratio</div>
<div style="left:390.5px;top:616px;width:1px;height:15px;background:#b8b8b8"></div>
<div class="t" style="left:350.0px;width:41.5px;text-align:center;top:620px;font-size:9.5px;letter-spacing:0">norm</div>
<div style="left:433.0px;top:616px;width:1px;height:15px;background:#b8b8b8"></div>
<div class="t" style="left:391.5px;width:42.5px;text-align:center;top:620px;font-size:9.5px;letter-spacing:0">calib</div>
<div style="left:16px;top:630px;width:418px;height:1px;background:#c8c8c8"></div>
<div style="left:38.5px;top:631.0px;width:395.5px;height:17.6px;background:#ffffff"></div>
<div style="left:16px;top:631.0px;width:22.5px;height:17.6px;background:#f0f0f0;border-bottom:1px solid #8a8a8a;border-right:1px solid #8a8a8a"></div>
<div class="t" style="left:16px;width:22px;text-align:center;top:633.5px;font-size:14px;line-height:15px;font-family:'Liberation Serif'">1</div>
<div style="left:76.0px;top:631.0px;width:1px;height:17.6px;background:#e6e6e6"></div>
<div class="t" style="left:39.5px;top:635.5px">all</div>
<div style="left:99.5px;top:631.0px;width:1px;height:17.6px;background:#e6e6e6"></div>
<div class="t" style="left:77.0px;width:21.5px;text-align:right;top:635.5px">1</div>
<div style="left:137.5px;top:631.0px;width:1px;height:17.6px;background:#e6e6e6"></div>
<div class="t" style="left:100.5px;width:36.0px;text-align:right;top:635.5px">21808</div>
<div style="left:175.5px;top:631.0px;width:1px;height:17.6px;background:#e6e6e6"></div>
<div class="t" style="left:138.5px;width:36.0px;text-align:right;top:635.5px">128</div>
<div style="left:214.0px;top:631.0px;width:1px;height:17.6px;background:#e6e6e6"></div>
<div class="t" style="left:176.5px;width:36.5px;text-align:right;top:635.5px">128</div>
<div style="left:260.5px;top:631.0px;width:1px;height:17.6px;background:#e6e6e6"></div>
<div class="t" style="left:215.0px;width:44.5px;text-align:right;top:635.5px">737.1346</div>
<div style="left:306.5px;top:631.0px;width:1px;height:17.6px;background:#e6e6e6"></div>
<div class="t" style="left:261.5px;width:44.0px;text-align:right;top:635.5px">433.5132</div>
<div style="left:349.0px;top:631.0px;width:1px;height:17.6px;background:#e6e6e6"></div>
<div class="t" style="left:307.5px;width:40.5px;text-align:right;top:635.5px">1.7004</div>
<div style="left:390.5px;top:631.0px;width:1px;height:17.6px;background:#e6e6e6"></div>
<div class="t" style="left:350.0px;width:39.5px;text-align:right;top:635.5px">0.1655</div>
<div style="left:433.0px;top:631.0px;width:1px;height:17.6px;background:#e6e6e6"></div>
<div class="t" style="left:391.5px;width:40.5px;text-align:right;top:635.5px">-338.3728</div>
<div style="left:38.5px;top:648.6px;width:395.5px;height:17.6px;background:#f3f3f3"></div>
<div style="left:16px;top:648.6px;width:22.5px;height:17.6px;background:#f0f0f0;border-bottom:1px solid #8a8a8a;border-right:1px solid #8a8a8a"></div>
<div class="t" style="left:16px;width:22px;text-align:center;top:651.1px;font-size:14px;line-height:15px;font-family:'Liberation Serif'">2</div>
<div style="left:76.0px;top:648.6px;width:1px;height:17.6px;background:#e6e6e6"></div>
<div class="t" style="left:39.5px;top:653.1px">GC</div>
<div style="left:99.5px;top:648.6px;width:1px;height:17.6px;background:#e6e6e6"></div>
<div class="t" style="left:77.0px;width:21.5px;text-align:right;top:653.1px">2</div>
<div style="left:137.5px;top:648.6px;width:1px;height:17.6px;background:#e6e6e6"></div>
<div class="t" style="left:100.5px;width:36.0px;text-align:right;top:653.1px">250</div>
<div style="left:175.5px;top:648.6px;width:1px;height:17.6px;background:#e6e6e6"></div>
<div class="t" style="left:138.5px;width:36.0px;text-align:right;top:653.1px">147</div>
<div style="left:214.0px;top:648.6px;width:1px;height:17.6px;background:#e6e6e6"></div>
<div class="t" style="left:176.5px;width:36.5px;text-align:right;top:653.1px">241</div>
<div style="left:260.5px;top:648.6px;width:1px;height:17.6px;background:#e6e6e6"></div>
<div class="t" style="left:215.0px;width:44.5px;text-align:right;top:653.1px">563.1460</div>
<div style="left:306.5px;top:648.6px;width:1px;height:17.6px;background:#e6e6e6"></div>
<div class="t" style="left:261.5px;width:44.0px;text-align:right;top:653.1px">331.9899</div>
<div style="left:349.0px;top:648.6px;width:1px;height:17.6px;background:#e6e6e6"></div>
<div class="t" style="left:307.5px;width:40.5px;text-align:right;top:653.1px">1.6963</div>
<div style="left:390.5px;top:648.6px;width:1px;height:17.6px;background:#e6e6e6"></div>
<div class="t" style="left:350.0px;width:39.5px;text-align:right;top:653.1px">0.1626</div>
<div style="left:433.0px;top:648.6px;width:1px;height:17.6px;background:#e6e6e6"></div>
<div class="t" style="left:391.5px;width:40.5px;text-align:right;top:653.1px">-338.6494</div>
<div style="left:38.5px;top:666.2px;width:395.5px;height:17.6px;background:#ffffff"></div>
<div style="left:16px;top:666.2px;width:22.5px;height:17.6px;background:#f0f0f0;border-bottom:1px solid #8a8a8a;border-right:1px solid #8a8a8a"></div>
<div class="t" style="left:16px;width:22px;text-align:center;top:668.7px;font-size:14px;line-height:15px;font-family:'Liberation Serif'">3</div>
<div style="left:76.0px;top:666.2px;width:1px;height:17.6px;background:#e6e6e6"></div>
<div class="t" style="left:39.5px;top:670.7px">EP</div>
<div style="left:99.5px;top:666.2px;width:1px;height:17.6px;background:#e6e6e6"></div>
<div class="t" style="left:77.0px;width:21.5px;text-align:right;top:670.7px">3</div>
<div style="left:137.5px;top:666.2px;width:1px;height:17.6px;background:#e6e6e6"></div>
<div class="t" style="left:100.5px;width:36.0px;text-align:right;top:670.7px">1318</div>
<div style="left:175.5px;top:666.2px;width:1px;height:17.6px;background:#e6e6e6"></div>
<div class="t" style="left:138.5px;width:36.0px;text-align:right;top:670.7px">62</div>
<div style="left:214.0px;top:666.2px;width:1px;height:17.6px;background:#e6e6e6"></div>
<div class="t" style="left:176.5px;width:36.5px;text-align:right;top:670.7px">145</div>
<div style="left:260.5px;top:666.2px;width:1px;height:17.6px;background:#e6e6e6"></div>
<div class="t" style="left:215.0px;width:44.5px;text-align:right;top:670.7px">966.1632</div>
<div style="left:306.5px;top:666.2px;width:1px;height:17.6px;background:#e6e6e6"></div>
<div class="t" style="left:261.5px;width:44.0px;text-align:right;top:670.7px">580.8878</div>
<div style="left:349.0px;top:666.2px;width:1px;height:17.6px;background:#e6e6e6"></div>
<div class="t" style="left:307.5px;width:40.5px;text-align:right;top:670.7px">1.6633</div>
<div style="left:390.5px;top:666.2px;width:1px;height:17.6px;background:#e6e6e6"></div>
<div class="t" style="left:350.0px;width:39.5px;text-align:right;top:670.7px">0.1384</div>
<div style="left:433.0px;top:666.2px;width:1px;height:17.6px;background:#e6e6e6"></div>
<div class="t" style="left:391.5px;width:40.5px;text-align:right;top:670.7px">-341.0811</div>
<div style="left:38.5px;top:683.8px;width:395.5px;height:17.6px;background:#f3f3f3"></div>
<div style="left:16px;top:683.8px;width:22.5px;height:17.6px;background:#f0f0f0;border-bottom:1px solid #8a8a8a;border-right:1px solid #8a8a8a"></div>
<div class="t" style="left:16px;width:22px;text-align:center;top:686.3px;font-size:14px;line-height:15px;font-family:'Liberation Serif'">4</div>
<div style="left:76.0px;top:683.8px;width:1px;height:17.6px;background:#e6e6e6"></div>
<div class="t" style="left:39.5px;top:688.3px">EP</div>
<div style="left:99.5px;top:683.8px;width:1px;height:17.6px;background:#e6e6e6"></div>
<div class="t" style="left:77.0px;width:21.5px;text-align:right;top:688.3px">4</div>
<div style="left:137.5px;top:683.8px;width:1px;height:17.6px;background:#e6e6e6"></div>
<div class="t" style="left:100.5px;width:36.0px;text-align:right;top:688.3px">1039</div>
<div style="left:175.5px;top:683.8px;width:1px;height:17.6px;background:#e6e6e6"></div>
<div class="t" style="left:138.5px;width:36.0px;text-align:right;top:688.3px">170</div>
<div style="left:214.0px;top:683.8px;width:1px;height:17.6px;background:#e6e6e6"></div>
<div class="t" style="left:176.5px;width:36.5px;text-align:right;top:688.3px">138</div>
<div style="left:260.5px;top:683.8px;width:1px;height:17.6px;background:#e6e6e6"></div>
<div class="t" style="left:215.0px;width:44.5px;text-align:right;top:688.3px">951.4589</div>
<div style="left:306.5px;top:683.8px;width:1px;height:17.6px;background:#e6e6e6"></div>
<div class="t" style="left:261.5px;width:44.0px;text-align:right;top:688.3px">497.1507</div>
<div style="left:349.0px;top:683.8px;width:1px;height:17.6px;background:#e6e6e6"></div>
<div class="t" style="left:307.5px;width:40.5px;text-align:right;top:688.3px">1.9138</div>
<div style="left:390.5px;top:683.8px;width:1px;height:17.6px;background:#e6e6e6"></div>
<div class="t" style="left:350.0px;width:39.5px;text-align:right;top:688.3px">0.3067</div>
<div style="left:433.0px;top:683.8px;width:1px;height:17.6px;background:#e6e6e6"></div>
<div class="t" style="left:391.5px;width:40.5px;text-align:right;top:688.3px">-328.0685</div>
<div class="fr" style="left:467px;top:24px;width:208px;height:384px"></div>
<div class="ft" style="left:477px;top:17px">Parameters</div>
<div class="btn" style="left:476px;top:33px;width:38px;height:16px;line-height:14px;">Probe</div>
<div class="t" style="top:32px;left:419px;width:300px;text-align:center;">roGFP1_resting.lsm</div>
<div class="btn" style="left:622px;top:33px;width:38px;height:17px;line-height:15px;">Edit</div>
<div class="cb" style="left:476px;top:56px;width:13px;height:13px"><svg width="13" height="13" style="position:absolute;left:-1px;top:-1px" viewBox="0 0 13 13"><path d="M3.2 6 L5.4 9.2 L9.8 2.8" stroke="#4257a8" stroke-width="1.8" fill="none"/></svg></div>
<div class="t" style="top:58px;left:492px;">re-use</div>
<div class="t" style="top:57px;left:265px;width:300px;text-align:right;">Treatment</div>
<div class="pp" style="left:568px;top:55px;width:93px;height:17px;line-height:15px"><span style="padding-left:3px">Control</span><div class="pa"><div class="tri"></div></div></div>
<div class="cb" style="left:476px;top:79px;width:13px;height:13px"><svg width="13" height="13" style="position:absolute;left:-1px;top:-1px" viewBox="0 0 13 13"><path d="M3.2 6 L5.4 9.2 L9.8 2.8" stroke="#4257a8" stroke-width="1.8" fill="none"/></svg></div>
<div class="t" style="top:81px;left:492px;">re-use</div>
<div class="t" style="top:79px;left:266px;width:300px;text-align:right;">Probe type</div>
<div class="pp" style="left:568px;top:76px;width:93px;height:17px;line-height:15px"><span style="padding-left:3px">roGFP</span><div class="pa"><div class="tri"></div></div></div>
<div class="t" style="top:98px;left:264px;width:300px;text-align:right;">experiment type</div>
<div class="t" style="top:98px;left:569px;">redox</div>
<div class="t" style="top:108px;left:264px;width:300px;text-align:right;">channel 1</div>
<div class="t" style="top:108px;left:569px;">3</div>
<div class="t" style="top:119px;left:264px;width:300px;text-align:right;">channel 2</div>
<div class="t" style="top:119px;left:569px;">1</div>
<div class="t" style="top:130px;left:264px;width:300px;text-align:right;">channel 3</div>
<div class="t" style="top:130px;left:569px;">2</div>
<div class="t" style="top:141px;left:264px;width:300px;text-align:right;">precision</div>
<div class="t" style="top:141px;left:569px;">single</div>
<div class="t" style="top:152px;left:264px;width:300px;text-align:right;">xy average</div>
<div class="t" style="top:152px;left:569px;">5</div>
<div class="t" style="top:162px;left:264px;width:300px;text-align:right;">t average</div>
<div class="t" style="top:162px;left:569px;">1</div>
<div class="t" style="top:173px;left:264px;width:300px;text-align:right;">subsample</div>
<div class="t" style="top:173px;left:569px;">No</div>
<div class="t" style="top:184px;left:264px;width:300px;text-align:right;">SD thresh</div>
<div class="t" style="top:184px;left:569px;">2</div>
<div class="t" style="top:195px;left:264px;width:300px;text-align:right;">saturation</div>
<div class="t" style="top:195px;left:569px;">0.9</div>
<div class="t" style="top:206px;left:264px;width:300px;text-align:right;">ratio order</div>
<div class="t" style="top:206px;left:569px;">normal</div>
<div class="t" style="top:216px;left:264px;width:300px;text-align:right;">ratio scale</div>
<div class="t" style="top:216px;left:569px;">lin</div>
<div class="t" style="top:227px;left:264px;width:300px;text-align:right;">R min</div>
<div class="t" style="top:227px;left:569px;">1.4</div>
<div class="t" style="top:238px;left:264px;width:300px;text-align:right;">R max</div>
<div class="t" style="top:238px;left:569px;">4</div>
<div class="t" style="top:249px;left:264px;width:300px;text-align:right;">Intensity scale</div>
<div class="t" style="top:249px;left:569px;">lin</div>
<div class="t" style="top:259px;left:264px;width:300px;text-align:right;">I min</div>
<div class="t" style="top:259px;left:569px;">0</div>
<div class="t" style="top:270px;left:264px;width:300px;text-align:right;">I max</div>
<div class="t" style="top:270px;left:569px;">2000</div>
<div class="t" style="top:281px;left:264px;width:300px;text-align:right;">white background</div>
<div class="t" style="top:281px;left:569px;">black</div>
<div class="t" style="top:292px;left:264px;width:300px;text-align:right;">midpoint</div>
<div class="t" style="top:292px;left:569px;">-288</div>
<div class="t" style="top:303px;left:264px;width:300px;text-align:right;">pH</div>
<div class="t" style="top:303px;left:569px;">7.5</div>
<div class="t" style="top:313px;left:264px;width:300px;text-align:right;">I factor</div>
<div class="t" style="top:313px;left:569px;">0.48</div>
<div class="t" style="top:324px;left:264px;width:300px;text-align:right;">Hill coefficient</div>
<div class="t" style="top:324px;left:569px;">1</div>
<div class="t" style="top:335px;left:264px;width:300px;text-align:right;">Estimated Rmin</div>
<div class="t" style="top:335px;left:569px;">1.49</div>
<div class="t" style="top:346px;left:264px;width:300px;text-align:right;">Estimated Rmax</div>
<div class="t" style="top:346px;left:569px;">3.91</div>
<div class="t" style="top:356px;left:264px;width:300px;text-align:right;">autoflr. corr.</div>
<div class="t" style="top:356px;left:569px;">0.56</div>
<div class="t" style="top:367px;left:264px;width:300px;text-align:right;">apply auto. corr.</div>
<div class="t" style="top:367px;left:569px;">0</div>
<div class="t" style="top:378px;left:264px;width:300px;text-align:right;">Out-Of-Range</div>
<div class="t" style="top:378px;left:569px;">0</div>
<div class="fr" style="left:467px;top:415px;width:208px;height:61px"></div>
<div class="ft" style="left:477px;top:408px">Background</div>
<div class="t" style="top:420px;left:380px;width:300px;text-align:center;">ch1</div>
<div class="t" style="top:420px;left:418px;width:300px;text-align:center;">ch2</div>
<div class="t" style="top:420px;left:456px;width:300px;text-align:center;">auto.</div>
<div class="t" style="top:436px;left:479px;">back</div>
<div class="ed" style="left:513px;top:431px;width:32px;height:17px;line-height:15px;text-align:center">202.8</div>
<div class="ed" style="left:552px;top:431px;width:32px;height:17px;line-height:15px;text-align:center">90.2</div>
<div class="ed" style="left:590px;top:431px;width:32px;height:17px;line-height:15px;text-align:center">180.7</div>
<div class="t" style="top:459px;left:482px;">SD</div>
<div class="ed" style="left:514px;top:454px;width:32px;height:17px;line-height:15px;text-align:center">117.8</div>
<div class="ed" style="left:551px;top:454px;width:32px;height:17px;line-height:15px;text-align:center">40.8</div>
<div class="ed" style="left:589px;top:453px;width:33px;height:17px;line-height:15px;text-align:center">108.7</div>
<div class="btn" style="left:629px;top:454px;width:38px;height:15px;line-height:13px;">Back</div>
<div class="fr" style="left:467px;top:484px;width:208px;height:39px"></div>
<div class="ft" style="left:477px;top:477px">Auto-fluorescence measurement</div>
<div class="t" style="top:496px;left:479px;">default</div>
<div class="ed" style="left:513px;top:492px;width:32px;height:16px;line-height:14px;text-align:center">0.56</div>
<div class="cb" style="left:553px;top:495px;width:12px;height:12px"></div>
<div class="t" style="top:496px;left:568px;">use</div>
<div class="ed" style="left:590px;top:493px;width:32px;height:16px;line-height:14px;text-align:center">0.50</div>
<div class="btn" style="left:629px;top:493px;width:38px;height:15px;line-height:13px;">auto corr</div>
<div class="fr" style="left:467px;top:530px;width:208px;height:101px"></div>
<div class="ft" style="left:477px;top:523px">Align channels</div>
<div class="cb" style="left:515px;top:541px;width:12px;height:12px"></div>
<div class="t" style="top:543px;left:530px;">ch1</div>
<div class="cb" style="left:553px;top:541px;width:12px;height:12px"><svg width="13" height="13" style="position:absolute;left:-1px;top:-1px" viewBox="0 0 13 13"><path d="M3.2 6 L5.4 9.2 L9.8 2.8" stroke="#4257a8" stroke-width="1.8" fill="none"/></svg></div>
<div class="t" style="top:543px;left:569px;">ch2</div>
<div class="cb" style="left:592px;top:541px;width:12px;height:12px"></div>
<div class="t" style="top:543px;left:607px;">ch3</div>
<div class="cb" style="left:637px;top:541px;width:12px;height:12px"></div>
<div class="t" style="top:543px;left:653px;">use</div>
<div class="t" style="top:567px;left:483px;">Vert.</div>
<div class="ed" style="left:514px;top:562px;width:31px;height:16px;line-height:14px;text-align:center">0</div>
<div class="ed" style="left:552px;top:562px;width:32px;height:16px;line-height:14px;text-align:center">0.3</div>
<div class="ed" style="left:591px;top:562px;width:31px;height:16px;line-height:14px;text-align:center">0</div>
<div class="btn" style="left:630px;top:563px;width:37px;height:15px;line-height:13px;">reset</div>
<div class="t" style="top:589px;left:481px;">Horiz.</div>
<div class="ed" style="left:514px;top:585px;width:31px;height:16px;line-height:14px;text-align:center">0</div>
<div class="ed" style="left:552px;top:585px;width:32px;height:16px;line-height:14px;text-align:center">0.39</div>
<div class="ed" style="left:591px;top:585px;width:31px;height:16px;line-height:14px;text-align:center">0</div>
<div class="btn" style="left:629px;top:585px;width:38px;height:15px;line-height:13px;">Measure</div>
<div class="t" style="top:612px;left:538px;">Ref channel</div>
<div class="pp" style="left:591px;top:608px;width:31px;height:17px;line-height:15px"><span style="padding-left:3px">1</span><div class="pa"><div class="tri"></div></div></div>
<div class="btn" style="left:629px;top:608px;width:38px;height:14px;line-height:12px;">Align</div>
<div class="fr" style="left:467px;top:637px;width:208px;height:70px"></div>
<div class="ft" style="left:477px;top:630px">Set-up ROI</div>
<div class="t" style="top:642px;left:350px;width:300px;text-align:center;">ROI type</div>
<div class="t" style="top:642px;left:396px;width:300px;text-align:center;">size</div>
<div class="t" style="top:642px;left:441px;width:300px;text-align:center;">ROI ID</div>
<div class="pp" style="left:475px;top:654px;width:46px;height:17px;line-height:15px"><span style="padding-left:3px">point</span><div class="pa"><div class="tri"></div></div></div>
<div class="pp" style="left:529px;top:654px;width:31px;height:17px;line-height:15px"><span style="padding-left:3px">16</span><div class="pa"><div class="tri"></div></div></div>
<div class="pp" style="left:567px;top:654px;width:47px;height:17px;line-height:15px"><span style="padding-left:3px">EP</span><div class="pa"><div class="tri"></div></div></div>
<div class="btn" style="left:629px;top:654px;width:38px;height:14px;line-height:12px;">add ROI</div>
<div class="btn" style="left:477px;top:678px;width:44px;height:14px;line-height:12px;">clear ROI</div>
<div class="pp" style="left:529px;top:677px;width:31px;height:16px;line-height:14px"><span style="padding-left:3px">1</span><div class="pa"><div class="tri"></div></div></div>
<div class="btn" style="left:568px;top:678px;width:46px;height:14px;line-height:12px;">clear all</div>
<div class="cb" style="left:630px;top:679px;width:12px;height:12px"><svg width="13" height="13" style="position:absolute;left:-1px;top:-1px" viewBox="0 0 13 13"><path d="M3.2 6 L5.4 9.2 L9.8 2.8" stroke="#4257a8" stroke-width="1.8" fill="none"/></svg></div>
<div class="t" style="top:682px;left:646px;">use</div>
<div class="fr" style="left:467px;top:714px;width:208px;height:40px"></div>
<div class="ft" style="left:477px;top:707px">Test</div>
<div class="btn" style="left:477px;top:723px;width:37px;height:22px;line-height:20px;">print</div>
<div class="btn" style="left:630px;top:723px;width:38px;height:22px;line-height:20px;">Test</div>
<div class="fr" style="left:674px;top:24px;width:238px;height:384px"></div>
<div class="ft" style="left:684px;top:17px">Output</div>
<div class="t" style="top:33px;left:664px;width:300px;text-align:center;">Directory</div>
<div class="lb" style="left:728px;top:64px;width:171px;height:337px">
<div class="li" style="top:-0.50px;width:152px">roGFP1_DTT.lsm</div>
<div class="li" style="top:10.19px;width:152px">roGFP1_H2O2.lsm</div>
<div class="li" style="top:20.88px;width:152px;background:#3399ff;color:#fff">roGFP1_resting.lsm</div>
<div class="sb" style="left:152px;top:0;width:17px;height:335px"><div class="tru" style="left:5px;top:7px"></div><div class="trd" style="left:5px;top:324px"></div></div>
</div>
<div class="btn" style="left:684px;top:110px;width:37px;height:21px;line-height:19px;font-size:15px;">&gt;</div>
<div class="btn" style="left:684px;top:148px;width:37px;height:22px;line-height:20px;font-size:15px;">&lt;</div>
<div class="btn" style="left:684px;top:194px;width:37px;height:22px;line-height:20px;font-size:15px;">&gt;&gt;</div>
<div class="btn" style="left:684px;top:232px;width:37px;height:22px;line-height:20px;font-size:15px;">&lt;&lt;</div>
<div class="fr" style="left:674px;top:415px;width:238px;height:223px"></div>
<div class="ft" style="left:684px;top:408px">Graphs</div>
<div style="left:728.6px;top:423.4px;width:169.19999999999993px;height:177.30000000000007px;background:#fff"></div>
<div style="left:0;top:0;width:930px;height:761px;overflow:hidden;clip-path:inset(420.4px 31.200000000000045px 158.29999999999995px 728.6px)"><svg style="position:absolute;left:0;top:0" width="930" height="761"><path d="M738.3,576.3L740.5,578.5L738.3,580.7L736.1,578.5Z" fill="#0000ff"/><path d="M768.5,544.6L770.7,546.8L768.5,549.0L766.3,546.8Z" fill="#0000ff"/><path d="M746.0,577.7L748.2,579.9L746.0,582.1L743.8,579.9Z" fill="#0000ff"/><path d="M821.4,424.3L823.6,426.5L821.4,428.7L819.2,426.5Z" fill="#0000ff"/><path d="M780.1,491.4L782.3,493.6L780.1,495.8L777.9,493.6Z" fill="#0000ff"/><path d="M754.3,542.9L756.5,545.1L754.3,547.3L752.1,545.1Z" fill="#0000ff"/><path d="M750.0,559.3L752.2,561.5L750.0,563.7L747.8,561.5Z" fill="#0000ff"/><path d="M768.4,515.3L770.6,517.5L768.4,519.7L766.2,517.5Z" fill="#0000ff"/><path d="M792.5,476.1L794.7,478.3L792.5,480.5L790.3,478.3Z" fill="#0000ff"/><path d="M799.5,459.0L801.7,461.2L799.5,463.4L797.3,461.2Z" fill="#0000ff"/><path d="M788.9,452.8L791.1,455.0L788.9,457.2L786.7,455.0Z" fill="#0000ff"/><path d="M751.1,577.6L753.3,579.8L751.1,582.0L748.9,579.8Z" fill="#0000ff"/><path d="M773.8,567.6L776.0,569.8L773.8,572.0L771.6,569.8Z" fill="#0000ff"/><path d="M740.7,574.7L742.9,576.9L740.7,579.1L738.5,576.9Z" fill="#0000ff"/><path d="M761.6,551.1L763.8,553.3L761.6,555.5L759.4,553.3Z" fill="#0000ff"/><path d="M810.8,466.1L813.0,468.3L810.8,470.5L808.6,468.3Z" fill="#0000ff"/><path d="M806.3,426.7L808.5,428.9L806.3,431.1L804.1,428.9Z" fill="#0000ff"/><path d="M765.3,577.3L767.5,579.5L765.3,581.7L763.1,579.5Z" fill="#0000ff"/><path d="M749.4,553.5L751.6,555.7L749.4,557.9L747.2,555.7Z" fill="#0000ff"/><path d="M740.0,576.7L742.2,578.9L740.0,581.1L737.8,578.9Z" fill="#0000ff"/><path d="M743.1,577.6L745.3,579.8L743.1,582.0L740.9,579.8Z" fill="#0000ff"/><path d="M816.0,427.3L818.2,429.5L816.0,431.7L813.8,429.5Z" fill="#0000ff"/><path d="M737.7,577.4L739.9,579.6L737.7,581.8L735.5,579.6Z" fill="#0000ff"/><path d="M787.1,512.3L789.3,514.5L787.1,516.7L784.9,514.5Z" fill="#0000ff"/><path d="M749.7,577.7L751.9,579.9L749.7,582.1L747.5,579.9Z" fill="#0000ff"/><path d="M758.3,573.6L760.5,575.8L758.3,578.0L756.1,575.8Z" fill="#0000ff"/><path d="M814.9,422.9L817.1,425.1L814.9,427.3L812.7,425.1Z" fill="#0000ff"/><path d="M752.2,577.6L754.4,579.8L752.2,582.0L750.0,579.8Z" fill="#0000ff"/><path d="M749.6,569.6L751.8,571.8L749.6,574.0L747.4,571.8Z" fill="#0000ff"/><path d="M751.7,577.3L753.9,579.5L751.7,581.7L749.5,579.5Z" fill="#0000ff"/><path d="M797.6,442.3L799.8,444.5L797.6,446.7L795.4,444.5Z" fill="#0000ff"/><path d="M734.4,571.4L736.6,573.6L734.4,575.8L732.2,573.6Z" fill="#0000ff"/><path d="M754.2,549.5L756.4,551.7L754.2,553.9L752.0,551.7Z" fill="#0000ff"/><path d="M746.8,545.5L749.0,547.7L746.8,549.9L744.6,547.7Z" fill="#0000ff"/><path d="M766.4,525.0L768.6,527.2L766.4,529.4L764.2,527.2Z" fill="#0000ff"/><path d="M735.7,574.7L737.9,576.9L735.7,579.1L733.5,576.9Z" fill="#0000ff"/><path d="M744.9,577.7L747.1,579.9L744.9,582.1L742.7,579.9Z" fill="#0000ff"/><path d="M744.6,576.0L746.8,578.2L744.6,580.4L742.4,578.2Z" fill="#0000ff"/><path d="M755.6,544.3L757.8,546.5L755.6,548.7L753.4,546.5Z" fill="#0000ff"/><path d="M758.1,534.2L760.3,536.4L758.1,538.6L755.9,536.4Z" fill="#0000ff"/><path d="M762.3,534.9L764.5,537.1L762.3,539.3L760.1,537.1Z" fill="#0000ff"/><path d="M767.2,550.0L769.4,552.2L767.2,554.4L765.0,552.2Z" fill="#0000ff"/><path d="M739.1,572.1L741.3,574.3L739.1,576.5L736.9,574.3Z" fill="#0000ff"/><path d="M756.1,574.7L758.3,576.9L756.1,579.1L753.9,576.9Z" fill="#0000ff"/><path d="M746.0,576.2L748.2,578.4L746.0,580.6L743.8,578.4Z" fill="#0000ff"/><path d="M738.9,576.6L741.1,578.8L738.9,581.0L736.7,578.8Z" fill="#0000ff"/><path d="M733.9,576.3L736.1,578.5L733.9,580.7L731.7,578.5Z" fill="#0000ff"/><path d="M751.8,577.6L754.0,579.8L751.8,582.0L749.6,579.8Z" fill="#0000ff"/><path d="M753.1,577.2L755.3,579.4L753.1,581.6L750.9,579.4Z" fill="#0000ff"/><path d="M753.0,540.1L755.2,542.3L753.0,544.5L750.8,542.3Z" fill="#0000ff"/><path d="M748.3,577.5L750.5,579.7L748.3,581.9L746.1,579.7Z" fill="#0000ff"/><path d="M749.5,577.0L751.7,579.2L749.5,581.4L747.3,579.2Z" fill="#0000ff"/><path d="M742.0,575.4L744.2,577.6L742.0,579.8L739.8,577.6Z" fill="#0000ff"/><path d="M756.4,541.6L758.6,543.8L756.4,546.0L754.2,543.8Z" fill="#0000ff"/><path d="M751.0,575.0L753.2,577.2L751.0,579.4L748.8,577.2Z" fill="#0000ff"/><path d="M738.7,575.6L740.9,577.8L738.7,580.0L736.5,577.8Z" fill="#0000ff"/><path d="M753.4,569.5L755.6,571.7L753.4,573.9L751.2,571.7Z" fill="#0000ff"/><path d="M766.5,575.2L768.7,577.4L766.5,579.6L764.3,577.4Z" fill="#0000ff"/><path d="M796.8,456.4L799.0,458.6L796.8,460.8L794.6,458.6Z" fill="#0000ff"/><path d="M747.5,575.1L749.7,577.3L747.5,579.5L745.3,577.3Z" fill="#0000ff"/><path d="M759.4,550.6L761.6,552.8L759.4,555.0L757.2,552.8Z" fill="#0000ff"/><path d="M792.4,500.0L794.6,502.2L792.4,504.4L790.2,502.2Z" fill="#0000ff"/><path d="M788.4,457.9L790.6,460.1L788.4,462.3L786.2,460.1Z" fill="#0000ff"/><path d="M808.9,467.9L811.1,470.1L808.9,472.3L806.7,470.1Z" fill="#0000ff"/><path d="M747.7,577.2L749.9,579.4L747.7,581.6L745.5,579.4Z" fill="#0000ff"/><path d="M769.8,546.9L772.0,549.1L769.8,551.3L767.6,549.1Z" fill="#0000ff"/><path d="M749.9,572.7L752.1,574.9L749.9,577.1L747.7,574.9Z" fill="#0000ff"/><path d="M760.9,558.0L763.1,560.2L760.9,562.4L758.7,560.2Z" fill="#0000ff"/><path d="M811.3,458.8L813.5,461.0L811.3,463.2L809.1,461.0Z" fill="#0000ff"/><path d="M748.7,576.0L750.9,578.2L748.7,580.4L746.5,578.2Z" fill="#0000ff"/><path d="M744.7,575.6L746.9,577.8L744.7,580.0L742.5,577.8Z" fill="#0000ff"/><path d="M749.0,577.7L751.2,579.9L749.0,582.1L746.8,579.9Z" fill="#0000ff"/><path d="M768.3,577.5L770.5,579.7L768.3,581.9L766.1,579.7Z" fill="#0000ff"/><path d="M797.7,485.1L799.9,487.3L797.7,489.5L795.5,487.3Z" fill="#0000ff"/><path d="M747.0,561.6L749.2,563.8L747.0,566.0L744.8,563.8Z" fill="#0000ff"/><path d="M768.8,540.7L771.0,542.9L768.8,545.1L766.6,542.9Z" fill="#0000ff"/><path d="M745.4,572.3L747.6,574.5L745.4,576.7L743.2,574.5Z" fill="#0000ff"/><path d="M758.1,555.3L760.3,557.5L758.1,559.7L755.9,557.5Z" fill="#0000ff"/><path d="M751.9,571.3L754.1,573.5L751.9,575.7L749.7,573.5Z" fill="#0000ff"/><path d="M765.6,548.1L767.8,550.3L765.6,552.5L763.4,550.3Z" fill="#0000ff"/><path d="M740.7,571.3L742.9,573.5L740.7,575.7L738.5,573.5Z" fill="#0000ff"/><path d="M740.8,571.7L743.0,573.9L740.8,576.1L738.6,573.9Z" fill="#0000ff"/><path d="M760.9,529.1L763.1,531.3L760.9,533.5L758.7,531.3Z" fill="#0000ff"/><path d="M737.3,576.2L739.5,578.4L737.3,580.6L735.1,578.4Z" fill="#0000ff"/><path d="M754.3,530.8L756.5,533.0L754.3,535.2L752.1,533.0Z" fill="#0000ff"/><path d="M794.6,475.8L796.8,478.0L794.6,480.2L792.4,478.0Z" fill="#0000ff"/><path d="M749.7,571.6L751.9,573.8L749.7,576.0L747.5,573.8Z" fill="#0000ff"/><path d="M741.8,565.3L744.0,567.5L741.8,569.7L739.6,567.5Z" fill="#0000ff"/><path d="M793.7,499.0L795.9,501.2L793.7,503.4L791.5,501.2Z" fill="#0000ff"/><path d="M749.6,536.7L751.8,538.9L749.6,541.1L747.4,538.9Z" fill="#0000ff"/><path d="M753.1,554.2L755.3,556.4L753.1,558.6L750.9,556.4Z" fill="#0000ff"/><path d="M746.0,577.4L748.2,579.6L746.0,581.8L743.8,579.6Z" fill="#0000ff"/><path d="M761.2,577.7L763.4,579.9L761.2,582.1L759.0,579.9Z" fill="#0000ff"/><path d="M757.9,575.4L760.1,577.6L757.9,579.8L755.7,577.6Z" fill="#0000ff"/><path d="M738.6,577.5L740.8,579.7L738.6,581.9L736.4,579.7Z" fill="#0000ff"/><path d="M786.0,445.2L788.2,447.4L786.0,449.6L783.8,447.4Z" fill="#0000ff"/><path d="M745.4,577.6L747.6,579.8L745.4,582.0L743.2,579.8Z" fill="#0000ff"/><path d="M793.0,453.2L795.2,455.4L793.0,457.6L790.8,455.4Z" fill="#0000ff"/><path d="M794.1,494.2L796.3,496.4L794.1,498.6L791.9,496.4Z" fill="#0000ff"/><path d="M735.3,577.1L737.5,579.3L735.3,581.5L733.1,579.3Z" fill="#0000ff"/><path d="M737.5,570.5L739.7,572.7L737.5,574.9L735.3,572.7Z" fill="#0000ff"/><path d="M744.7,570.3L746.9,572.5L744.7,574.7L742.5,572.5Z" fill="#0000ff"/><path d="M752.7,561.8L754.9,564.0L752.7,566.2L750.5,564.0Z" fill="#0000ff"/><path d="M756.3,569.3L758.5,571.5L756.3,573.7L754.1,571.5Z" fill="#0000ff"/><path d="M785.0,515.8L787.2,518.0L785.0,520.2L782.8,518.0Z" fill="#0000ff"/><path d="M737.9,560.0L740.1,562.2L737.9,564.4L735.7,562.2Z" fill="#0000ff"/><path d="M759.1,517.9L761.3,520.1L759.1,522.3L756.9,520.1Z" fill="#0000ff"/><path d="M765.5,525.3L767.7,527.5L765.5,529.7L763.3,527.5Z" fill="#0000ff"/><path d="M740.1,575.7L742.3,577.9L740.1,580.1L737.9,577.9Z" fill="#0000ff"/><path d="M742.7,576.4L744.9,578.6L742.7,580.8L740.5,578.6Z" fill="#0000ff"/><path d="M799.3,444.7L801.5,446.9L799.3,449.1L797.1,446.9Z" fill="#0000ff"/><path d="M776.2,485.4L778.4,487.6L776.2,489.8L774.0,487.6Z" fill="#0000ff"/><path d="M757.1,575.7L759.3,577.9L757.1,580.1L754.9,577.9Z" fill="#0000ff"/><path d="M749.5,571.1L751.7,573.3L749.5,575.5L747.3,573.3Z" fill="#0000ff"/><path d="M748.5,572.3L750.7,574.5L748.5,576.7L746.3,574.5Z" fill="#0000ff"/><path d="M809.0,426.5L811.2,428.7L809.0,430.9L806.8,428.7Z" fill="#0000ff"/><path d="M766.0,549.0L768.2,551.2L766.0,553.4L763.8,551.2Z" fill="#0000ff"/><path d="M753.0,524.9L755.2,527.1L753.0,529.3L750.8,527.1Z" fill="#0000ff"/><path d="M812.7,441.6L814.9,443.8L812.7,446.0L810.5,443.8Z" fill="#0000ff"/><path d="M743.9,576.5L746.1,578.7L743.9,580.9L741.7,578.7Z" fill="#0000ff"/><path d="M790.0,442.3L792.2,444.5L790.0,446.7L787.8,444.5Z" fill="#0000ff"/><path d="M746.4,576.2L748.6,578.4L746.4,580.6L744.2,578.4Z" fill="#0000ff"/><path d="M771.9,528.6L774.1,530.8L771.9,533.0L769.7,530.8Z" fill="#0000ff"/><path d="M798.5,467.9L800.7,470.1L798.5,472.3L796.3,470.1Z" fill="#0000ff"/><path d="M742.3,568.5L744.5,570.7L742.3,572.9L740.1,570.7Z" fill="#0000ff"/><path d="M750.1,577.6L752.3,579.8L750.1,582.0L747.9,579.8Z" fill="#0000ff"/><path d="M740.9,572.5L743.1,574.7L740.9,576.9L738.7,574.7Z" fill="#0000ff"/><path d="M737.1,576.8L739.3,579.0L737.1,581.2L734.9,579.0Z" fill="#0000ff"/><path d="M750.6,576.8L752.8,579.0L750.6,581.2L748.4,579.0Z" fill="#0000ff"/><path d="M798.0,443.9L800.2,446.1L798.0,448.3L795.8,446.1Z" fill="#0000ff"/><path d="M745.6,575.5L747.8,577.7L745.6,579.9L743.4,577.7Z" fill="#0000ff"/><path d="M749.8,577.6L752.0,579.8L749.8,582.0L747.6,579.8Z" fill="#0000ff"/><path d="M797.3,450.2L799.5,452.4L797.3,454.6L795.1,452.4Z" fill="#0000ff"/><path d="M769.3,511.3L771.5,513.5L769.3,515.7L767.1,513.5Z" fill="#0000ff"/><path d="M775.5,539.3L777.7,541.5L775.5,543.7L773.3,541.5Z" fill="#0000ff"/><path d="M760.0,575.7L762.2,577.9L760.0,580.1L757.8,577.9Z" fill="#0000ff"/><path d="M748.8,557.8L751.0,560.0L748.8,562.2L746.6,560.0Z" fill="#0000ff"/><path d="M747.3,562.5L749.5,564.7L747.3,566.9L745.1,564.7Z" fill="#0000ff"/><path d="M739.0,553.8L741.2,556.0L739.0,558.2L736.8,556.0Z" fill="#0000ff"/><path d="M769.2,540.9L771.4,543.1L769.2,545.3L767.0,543.1Z" fill="#0000ff"/><path d="M780.4,539.1L782.6,541.3L780.4,543.5L778.2,541.3Z" fill="#0000ff"/><path d="M790.6,454.4L792.8,456.6L790.6,458.8L788.4,456.6Z" fill="#0000ff"/><path d="M770.5,549.2L772.7,551.4L770.5,553.6L768.3,551.4Z" fill="#0000ff"/><path d="M757.4,540.6L759.6,542.8L757.4,545.0L755.2,542.8Z" fill="#0000ff"/><path d="M751.5,577.6L753.7,579.8L751.5,582.0L749.3,579.8Z" fill="#0000ff"/><path d="M770.6,516.3L772.8,518.5L770.6,520.7L768.4,518.5Z" fill="#0000ff"/><path d="M738.3,575.7L740.5,577.9L738.3,580.1L736.1,577.9Z" fill="#0000ff"/><path d="M781.4,478.5L783.6,480.7L781.4,482.9L779.2,480.7Z" fill="#0000ff"/><path d="M773.0,512.3L775.2,514.5L773.0,516.7L770.8,514.5Z" fill="#0000ff"/><path d="M743.5,572.7L745.7,574.9L743.5,577.1L741.3,574.9Z" fill="#0000ff"/><path d="M749.9,577.6L752.1,579.8L749.9,582.0L747.7,579.8Z" fill="#0000ff"/><path d="M777.7,509.4L779.9,511.6L777.7,513.8L775.5,511.6Z" fill="#0000ff"/><path d="M733.7,577.1L735.9,579.3L733.7,581.5L731.5,579.3Z" fill="#0000ff"/><path d="M788.8,498.2L791.0,500.4L788.8,502.6L786.6,500.4Z" fill="#0000ff"/><path d="M750.3,550.1L752.5,552.3L750.3,554.5L748.1,552.3Z" fill="#0000ff"/><path d="M756.0,558.8L758.2,561.0L756.0,563.2L753.8,561.0Z" fill="#0000ff"/><path d="M747.0,576.9L749.2,579.1L747.0,581.3L744.8,579.1Z" fill="#0000ff"/><path d="M775.8,502.2L778.0,504.4L775.8,506.6L773.6,504.4Z" fill="#0000ff"/><path d="M789.3,446.6L791.5,448.8L789.3,451.0L787.1,448.8Z" fill="#0000ff"/><path d="M754.3,543.1L756.5,545.3L754.3,547.5L752.1,545.3Z" fill="#0000ff"/><path d="M771.1,532.7L773.3,534.9L771.1,537.1L768.9,534.9Z" fill="#0000ff"/><path d="M747.3,548.6L749.5,550.8L747.3,553.0L745.1,550.8Z" fill="#0000ff"/><path d="M740.9,577.7L743.1,579.9L740.9,582.1L738.7,579.9Z" fill="#0000ff"/><path d="M741.7,559.3L743.9,561.5L741.7,563.7L739.5,561.5Z" fill="#0000ff"/><path d="M756.8,577.0L759.0,579.2L756.8,581.4L754.6,579.2Z" fill="#0000ff"/><path d="M762.6,540.9L764.8,543.1L762.6,545.3L760.4,543.1Z" fill="#0000ff"/><path d="M758.4,553.9L760.6,556.1L758.4,558.3L756.2,556.1Z" fill="#0000ff"/><path d="M773.2,505.5L775.4,507.7L773.2,509.9L771.0,507.7Z" fill="#0000ff"/><path d="M746.7,577.7L748.9,579.9L746.7,582.1L744.5,579.9Z" fill="#0000ff"/><path d="M756.7,557.4L758.9,559.6L756.7,561.8L754.5,559.6Z" fill="#0000ff"/><path d="M745.6,573.9L747.8,576.1L745.6,578.3L743.4,576.1Z" fill="#0000ff"/><path d="M781.8,483.7L784.0,485.9L781.8,488.1L779.6,485.9Z" fill="#0000ff"/><path d="M796.7,456.5L798.9,458.7L796.7,460.9L794.5,458.7Z" fill="#0000ff"/><path d="M769.5,501.1L771.7,503.3L769.5,505.5L767.3,503.3Z" fill="#0000ff"/><path d="M787.8,482.6L790.0,484.8L787.8,487.0L785.6,484.8Z" fill="#0000ff"/><path d="M736.2,577.6L738.4,579.8L736.2,582.0L734.0,579.8Z" fill="#0000ff"/><path d="M751.9,577.6L754.1,579.8L751.9,582.0L749.7,579.8Z" fill="#0000ff"/><path d="M775.1,529.9L777.3,532.1L775.1,534.3L772.9,532.1Z" fill="#0000ff"/><path d="M744.9,568.6L747.1,570.8L744.9,573.0L742.7,570.8Z" fill="#0000ff"/><path d="M782.6,515.6L784.8,517.8L782.6,520.0L780.4,517.8Z" fill="#0000ff"/><path d="M744.9,577.1L747.1,579.3L744.9,581.5L742.7,579.3Z" fill="#0000ff"/><path d="M739.0,571.8L741.2,574.0L739.0,576.2L736.8,574.0Z" fill="#0000ff"/><path d="M763.2,549.4L765.4,551.6L763.2,553.8L761.0,551.6Z" fill="#0000ff"/><path d="M775.4,508.2L777.6,510.4L775.4,512.6L773.2,510.4Z" fill="#0000ff"/><path d="M750.9,565.7L753.1,567.9L750.9,570.1L748.7,567.9Z" fill="#0000ff"/><path d="M754.0,569.9L756.2,572.1L754.0,574.3L751.8,572.1Z" fill="#0000ff"/><path d="M751.4,577.7L753.6,579.9L751.4,582.1L749.2,579.9Z" fill="#0000ff"/><path d="M755.8,576.5L758.0,578.7L755.8,580.9L753.6,578.7Z" fill="#0000ff"/><path d="M757.6,569.6L759.8,571.8L757.6,574.0L755.4,571.8Z" fill="#0000ff"/><path d="M749.9,575.1L752.1,577.3L749.9,579.5L747.7,577.3Z" fill="#0000ff"/><path d="M741.3,576.6L743.5,578.8L741.3,581.0L739.1,578.8Z" fill="#0000ff"/><path d="M758.9,545.1L761.1,547.3L758.9,549.5L756.7,547.3Z" fill="#0000ff"/><path d="M745.4,577.5L747.6,579.7L745.4,581.9L743.2,579.7Z" fill="#0000ff"/><path d="M767.8,506.8L770.0,509.0L767.8,511.2L765.6,509.0Z" fill="#0000ff"/><path d="M798.2,453.9L800.4,456.1L798.2,458.3L796.0,456.1Z" fill="#0000ff"/><path d="M788.2,498.6L790.4,500.8L788.2,503.0L786.0,500.8Z" fill="#0000ff"/><path d="M737.4,573.0L739.6,575.2L737.4,577.4L735.2,575.2Z" fill="#0000ff"/><path d="M749.3,577.6L751.5,579.8L749.3,582.0L747.1,579.8Z" fill="#0000ff"/><path d="M761.3,539.3L763.5,541.5L761.3,543.7L759.1,541.5Z" fill="#0000ff"/><path d="M798.2,460.6L800.4,462.8L798.2,465.0L796.0,462.8Z" fill="#0000ff"/><path d="M778.7,486.7L780.9,488.9L778.7,491.1L776.5,488.9Z" fill="#0000ff"/><path d="M768.8,534.1L771.0,536.3L768.8,538.5L766.6,536.3Z" fill="#0000ff"/><path d="M744.8,577.2L747.0,579.4L744.8,581.6L742.6,579.4Z" fill="#0000ff"/><path d="M749.8,572.2L752.0,574.4L749.8,576.6L747.6,574.4Z" fill="#0000ff"/><path d="M767.3,563.8L769.5,566.0L767.3,568.2L765.1,566.0Z" fill="#0000ff"/><path d="M735.4,577.2L737.6,579.4L735.4,581.6L733.2,579.4Z" fill="#0000ff"/><path d="M738.8,570.9L741.0,573.1L738.8,575.3L736.6,573.1Z" fill="#0000ff"/><path d="M756.3,577.3L758.5,579.5L756.3,581.7L754.1,579.5Z" fill="#0000ff"/><path d="M773.5,515.2L775.7,517.4L773.5,519.6L771.3,517.4Z" fill="#0000ff"/><path d="M753.5,577.6L755.7,579.8L753.5,582.0L751.3,579.8Z" fill="#0000ff"/><path d="M777.9,476.2L780.1,478.4L777.9,480.6L775.7,478.4Z" fill="#0000ff"/><path d="M748.2,566.5L750.4,568.7L748.2,570.9L746.0,568.7Z" fill="#0000ff"/><path d="M739.4,571.8L741.6,574.0L739.4,576.2L737.2,574.0Z" fill="#0000ff"/><path d="M758.0,570.1L760.2,572.3L758.0,574.5L755.8,572.3Z" fill="#0000ff"/><path d="M753.5,577.6L755.7,579.8L753.5,582.0L751.3,579.8Z" fill="#0000ff"/><path d="M765.8,540.3L768.0,542.5L765.8,544.7L763.6,542.5Z" fill="#0000ff"/><path d="M761.5,541.1L763.7,543.3L761.5,545.5L759.3,543.3Z" fill="#0000ff"/><path d="M752.5,577.7L754.7,579.9L752.5,582.1L750.3,579.9Z" fill="#0000ff"/><path d="M752.4,554.4L754.6,556.6L752.4,558.8L750.2,556.6Z" fill="#0000ff"/><path d="M778.1,508.8L780.3,511.0L778.1,513.2L775.9,511.0Z" fill="#0000ff"/><path d="M735.8,577.0L738.0,579.2L735.8,581.4L733.6,579.2Z" fill="#0000ff"/><path d="M747.9,577.6L750.1,579.8L747.9,582.0L745.7,579.8Z" fill="#0000ff"/><path d="M807.2,438.7L809.4,440.9L807.2,443.1L805.0,440.9Z" fill="#0000ff"/><path d="M785.1,470.5L787.3,472.7L785.1,474.9L782.9,472.7Z" fill="#0000ff"/><path d="M784.2,493.7L786.4,495.9L784.2,498.1L782.0,495.9Z" fill="#0000ff"/><path d="M766.1,541.7L768.3,543.9L766.1,546.1L763.9,543.9Z" fill="#0000ff"/><path d="M749.7,548.3L751.9,550.5L749.7,552.7L747.5,550.5Z" fill="#0000ff"/><path d="M737.4,576.8L739.6,579.0L737.4,581.2L735.2,579.0Z" fill="#0000ff"/><path d="M757.6,565.3L759.8,567.5L757.6,569.7L755.4,567.5Z" fill="#0000ff"/><path d="M754.3,563.4L756.5,565.6L754.3,567.8L752.1,565.6Z" fill="#0000ff"/><path d="M740.2,555.7L742.4,557.9L740.2,560.1L738.0,557.9Z" fill="#0000ff"/><path d="M763.7,547.9L765.9,550.1L763.7,552.3L761.5,550.1Z" fill="#0000ff"/><path d="M742.5,572.8L744.7,575.0L742.5,577.2L740.3,575.0Z" fill="#0000ff"/><path d="M754.5,577.6L756.7,579.8L754.5,582.0L752.3,579.8Z" fill="#0000ff"/><path d="M743.8,577.3L746.0,579.5L743.8,581.7L741.6,579.5Z" fill="#0000ff"/><path d="M804.9,466.5L807.1,468.7L804.9,470.9L802.7,468.7Z" fill="#0000ff"/><path d="M810.9,453.4L813.1,455.6L810.9,457.8L808.7,455.6Z" fill="#0000ff"/><path d="M755.3,574.9L757.5,577.1L755.3,579.3L753.1,577.1Z" fill="#0000ff"/><path d="M759.0,542.1L761.2,544.3L759.0,546.5L756.8,544.3Z" fill="#0000ff"/><path d="M740.9,567.9L743.1,570.1L740.9,572.3L738.7,570.1Z" fill="#0000ff"/><path d="M768.5,519.5L770.7,521.7L768.5,523.9L766.3,521.7Z" fill="#0000ff"/><path d="M751.2,574.8L753.4,577.0L751.2,579.2L749.0,577.0Z" fill="#0000ff"/><path d="M747.5,577.6L749.7,579.8L747.5,582.0L745.3,579.8Z" fill="#0000ff"/><path d="M793.9,477.1L796.1,479.3L793.9,481.5L791.7,479.3Z" fill="#0000ff"/><path d="M756.7,565.4L758.9,567.6L756.7,569.8L754.5,567.6Z" fill="#0000ff"/><path d="M757.8,557.0L760.0,559.2L757.8,561.4L755.6,559.2Z" fill="#0000ff"/><path d="M742.8,565.4L745.0,567.6L742.8,569.8L740.6,567.6Z" fill="#0000ff"/><path d="M779.8,501.0L782.0,503.2L779.8,505.4L777.6,503.2Z" fill="#0000ff"/><path d="M762.5,577.7L764.7,579.9L762.5,582.1L760.3,579.9Z" fill="#0000ff"/><path d="M753.8,558.4L756.0,560.6L753.8,562.8L751.6,560.6Z" fill="#0000ff"/><path d="M749.1,576.8L751.3,579.0L749.1,581.2L746.9,579.0Z" fill="#0000ff"/><path d="M755.6,565.2L757.8,567.4L755.6,569.6L753.4,567.4Z" fill="#0000ff"/><path d="M744.8,577.7L747.0,579.9L744.8,582.1L742.6,579.9Z" fill="#0000ff"/><path d="M755.8,556.5L758.0,558.7L755.8,560.9L753.6,558.7Z" fill="#0000ff"/><path d="M750.3,574.3L752.5,576.5L750.3,578.7L748.1,576.5Z" fill="#0000ff"/><path d="M737.9,575.8L740.1,578.0L737.9,580.2L735.7,578.0Z" fill="#0000ff"/><path d="M739.0,568.1L741.2,570.3L739.0,572.5L736.8,570.3Z" fill="#0000ff"/><path d="M749.0,577.5L751.2,579.7L749.0,581.9L746.8,579.7Z" fill="#0000ff"/><path d="M771.1,493.2L773.3,495.4L771.1,497.6L768.9,495.4Z" fill="#0000ff"/><path d="M759.9,575.3L762.1,577.5L759.9,579.7L757.7,577.5Z" fill="#0000ff"/><path d="M794.0,469.0L796.2,471.2L794.0,473.4L791.8,471.2Z" fill="#0000ff"/><path d="M766.1,565.0L768.3,567.2L766.1,569.4L763.9,567.2Z" fill="#0000ff"/><path d="M748.3,548.4L750.5,550.6L748.3,552.8L746.1,550.6Z" fill="#0000ff"/><path d="M757.8,559.9L760.0,562.1L757.8,564.3L755.6,562.1Z" fill="#0000ff"/><path d="M825.9,426.1L828.1,428.3L825.9,430.5L823.7,428.3Z" fill="#0000ff"/><path d="M754.2,566.3L756.4,568.5L754.2,570.7L752.0,568.5Z" fill="#0000ff"/><path d="M737.4,577.3L739.6,579.5L737.4,581.7L735.2,579.5Z" fill="#0000ff"/><path d="M784.4,486.3L786.6,488.5L784.4,490.7L782.2,488.5Z" fill="#0000ff"/><path d="M810.1,454.6L812.3,456.8L810.1,459.0L807.9,456.8Z" fill="#0000ff"/><path d="M755.7,556.1L757.9,558.3L755.7,560.5L753.5,558.3Z" fill="#0000ff"/><path d="M750.5,575.3L752.7,577.5L750.5,579.7L748.3,577.5Z" fill="#0000ff"/><path d="M759.2,536.4L761.4,538.6L759.2,540.8L757.0,538.6Z" fill="#0000ff"/><path d="M765.5,560.3L767.7,562.5L765.5,564.7L763.3,562.5Z" fill="#0000ff"/><path d="M743.4,577.0L745.6,579.2L743.4,581.4L741.2,579.2Z" fill="#0000ff"/><path d="M750.2,577.1L752.4,579.3L750.2,581.5L748.0,579.3Z" fill="#0000ff"/><path d="M739.9,575.6L742.1,577.8L739.9,580.0L737.7,577.8Z" fill="#0000ff"/><path d="M794.1,449.1L796.3,451.3L794.1,453.5L791.9,451.3Z" fill="#0000ff"/><path d="M750.9,577.5L753.1,579.7L750.9,581.9L748.7,579.7Z" fill="#0000ff"/><path d="M810.9,432.0L813.1,434.2L810.9,436.4L808.7,434.2Z" fill="#0000ff"/><path d="M752.3,577.6L754.5,579.8L752.3,582.0L750.1,579.8Z" fill="#0000ff"/><path d="M756.6,519.3L758.8,521.5L756.6,523.7L754.4,521.5Z" fill="#0000ff"/><path d="M734.3,577.7L736.5,579.9L734.3,582.1L732.1,579.9Z" fill="#0000ff"/><path d="M803.1,441.1L805.3,443.3L803.1,445.5L800.9,443.3Z" fill="#0000ff"/><path d="M757.2,575.7L759.4,577.9L757.2,580.1L755.0,577.9Z" fill="#0000ff"/><path d="M751.2,577.7L753.4,579.9L751.2,582.1L749.0,579.9Z" fill="#0000ff"/><path d="M792.4,465.5L794.6,467.7L792.4,469.9L790.2,467.7Z" fill="#0000ff"/><path d="M811.4,425.7L813.6,427.9L811.4,430.1L809.2,427.9Z" fill="#0000ff"/><path d="M742.4,577.7L744.6,579.9L742.4,582.1L740.2,579.9Z" fill="#0000ff"/><path d="M754.5,577.2L756.7,579.4L754.5,581.6L752.3,579.4Z" fill="#0000ff"/><path d="M760.3,558.0L762.5,560.2L760.3,562.4L758.1,560.2Z" fill="#0000ff"/><path d="M817.9,428.4L820.1,430.6L817.9,432.8L815.7,430.6Z" fill="#0000ff"/><path d="M752.2,577.5L754.4,579.7L752.2,581.9L750.0,579.7Z" fill="#0000ff"/><path d="M801.7,461.6L803.9,463.8L801.7,466.0L799.5,463.8Z" fill="#0000ff"/><path d="M771.5,577.0L773.7,579.2L771.5,581.4L769.3,579.2Z" fill="#0000ff"/><path d="M746.2,576.1L748.4,578.3L746.2,580.5L744.0,578.3Z" fill="#0000ff"/><path d="M798.9,445.9L801.1,448.1L798.9,450.3L796.7,448.1Z" fill="#0000ff"/><path d="M739.0,577.7L741.2,579.9L739.0,582.1L736.8,579.9Z" fill="#0000ff"/><path d="M759.8,517.9L762.0,520.1L759.8,522.3L757.6,520.1Z" fill="#0000ff"/><path d="M747.7,557.5L749.9,559.7L747.7,561.9L745.5,559.7Z" fill="#0000ff"/><path d="M756.5,558.0L758.7,560.2L756.5,562.4L754.3,560.2Z" fill="#0000ff"/><path d="M810.3,454.0L812.5,456.2L810.3,458.4L808.1,456.2Z" fill="#0000ff"/><path d="M749.4,577.1L751.6,579.3L749.4,581.5L747.2,579.3Z" fill="#0000ff"/><path d="M742.2,575.7L744.4,577.9L742.2,580.1L740.0,577.9Z" fill="#0000ff"/><path d="M756.9,575.4L759.1,577.6L756.9,579.8L754.7,577.6Z" fill="#0000ff"/><path d="M772.0,505.0L774.2,507.2L772.0,509.4L769.8,507.2Z" fill="#0000ff"/><path d="M761.2,513.1L763.4,515.3L761.2,517.5L759.0,515.3Z" fill="#0000ff"/><path d="M761.1,557.3L763.3,559.5L761.1,561.7L758.9,559.5Z" fill="#0000ff"/><path d="M757.2,573.9L759.4,576.1L757.2,578.3L755.0,576.1Z" fill="#0000ff"/><path d="M739.8,571.6L742.0,573.8L739.8,576.0L737.6,573.8Z" fill="#0000ff"/><path d="M819.5,431.9L821.7,434.1L819.5,436.3L817.3,434.1Z" fill="#0000ff"/><path d="M781.1,482.3L783.3,484.5L781.1,486.7L778.9,484.5Z" fill="#0000ff"/><path d="M771.1,575.6L773.3,577.8L771.1,580.0L768.9,577.8Z" fill="#0000ff"/><path d="M742.8,561.8L745.0,564.0L742.8,566.2L740.6,564.0Z" fill="#0000ff"/><path d="M758.0,575.3L760.2,577.5L758.0,579.7L755.8,577.5Z" fill="#0000ff"/><path d="M808.7,428.9L810.9,431.1L808.7,433.3L806.5,431.1Z" fill="#0000ff"/><path d="M758.4,567.2L760.6,569.4L758.4,571.6L756.2,569.4Z" fill="#0000ff"/><path d="M789.9,487.6L792.1,489.8L789.9,492.0L787.7,489.8Z" fill="#0000ff"/><path d="M765.4,572.0L767.6,574.2L765.4,576.4L763.2,574.2Z" fill="#0000ff"/><path d="M774.7,527.1L776.9,529.3L774.7,531.5L772.5,529.3Z" fill="#0000ff"/><path d="M740.0,574.7L742.2,576.9L740.0,579.1L737.8,576.9Z" fill="#0000ff"/><path d="M766.2,539.8L768.4,542.0L766.2,544.2L764.0,542.0Z" fill="#0000ff"/><path d="M757.1,551.2L759.3,553.4L757.1,555.6L754.9,553.4Z" fill="#0000ff"/><path d="M767.2,546.4L769.4,548.6L767.2,550.8L765.0,548.6Z" fill="#0000ff"/><path d="M745.9,577.6L748.1,579.8L745.9,582.0L743.7,579.8Z" fill="#0000ff"/><path d="M755.0,557.5L757.2,559.7L755.0,561.9L752.8,559.7Z" fill="#0000ff"/><path d="M761.6,558.0L763.8,560.2L761.6,562.4L759.4,560.2Z" fill="#0000ff"/><path d="M778.8,462.4L781.0,464.6L778.8,466.8L776.6,464.6Z" fill="#0000ff"/><path d="M770.4,533.6L772.6,535.8L770.4,538.0L768.2,535.8Z" fill="#0000ff"/><path d="M742.9,564.3L745.1,566.5L742.9,568.7L740.7,566.5Z" fill="#0000ff"/><path d="M752.5,575.1L754.7,577.3L752.5,579.5L750.3,577.3Z" fill="#0000ff"/><path d="M735.7,576.7L737.9,578.9L735.7,581.1L733.5,578.9Z" fill="#0000ff"/><path d="M749.2,577.7L751.4,579.9L749.2,582.1L747.0,579.9Z" fill="#0000ff"/><path d="M755.0,570.8L757.2,573.0L755.0,575.2L752.8,573.0Z" fill="#0000ff"/><path d="M743.2,567.9L745.4,570.1L743.2,572.3L741.0,570.1Z" fill="#0000ff"/><path d="M738.4,577.6L740.6,579.8L738.4,582.0L736.2,579.8Z" fill="#0000ff"/><path d="M819.0,426.3L821.2,428.5L819.0,430.7L816.8,428.5Z" fill="#0000ff"/><path d="M792.3,494.7L794.5,496.9L792.3,499.1L790.1,496.9Z" fill="#0000ff"/><path d="M753.4,568.9L755.6,571.1L753.4,573.3L751.2,571.1Z" fill="#0000ff"/><path d="M743.8,570.6L746.0,572.8L743.8,575.0L741.6,572.8Z" fill="#0000ff"/><path d="M735.2,575.2L737.4,577.4L735.2,579.6L733.0,577.4Z" fill="#0000ff"/><path d="M744.7,577.6L746.9,579.8L744.7,582.0L742.5,579.8Z" fill="#0000ff"/><path d="M741.5,564.9L743.7,567.1L741.5,569.3L739.3,567.1Z" fill="#0000ff"/><path d="M809.0,431.1L811.2,433.3L809.0,435.5L806.8,433.3Z" fill="#0000ff"/><path d="M745.4,558.7L747.6,560.9L745.4,563.1L743.2,560.9Z" fill="#0000ff"/><path d="M764.6,577.5L766.8,579.7L764.6,581.9L762.4,579.7Z" fill="#0000ff"/><path d="M760.4,545.5L762.6,547.7L760.4,549.9L758.2,547.7Z" fill="#0000ff"/><path d="M739.5,576.9L741.7,579.1L739.5,581.3L737.3,579.1Z" fill="#0000ff"/><path d="M749.7,577.0L751.9,579.2L749.7,581.4L747.5,579.2Z" fill="#0000ff"/><path d="M750.8,576.7L753.0,578.9L750.8,581.1L748.6,578.9Z" fill="#0000ff"/><path d="M793.2,462.2L795.4,464.4L793.2,466.6L791.0,464.4Z" fill="#0000ff"/><path d="M756.8,576.7L759.0,578.9L756.8,581.1L754.6,578.9Z" fill="#0000ff"/><path d="M750.6,571.0L752.8,573.2L750.6,575.4L748.4,573.2Z" fill="#0000ff"/><path d="M775.0,492.5L777.2,494.7L775.0,496.9L772.8,494.7Z" fill="#0000ff"/><path d="M751.6,577.1L753.8,579.3L751.6,581.5L749.4,579.3Z" fill="#0000ff"/><path d="M744.5,575.8L746.7,578.0L744.5,580.2L742.3,578.0Z" fill="#0000ff"/><path d="M750.3,576.6L752.5,578.8L750.3,581.0L748.1,578.8Z" fill="#0000ff"/><path d="M751.8,554.0L754.0,556.2L751.8,558.4L749.6,556.2Z" fill="#0000ff"/><path d="M755.0,536.0L757.2,538.2L755.0,540.4L752.8,538.2Z" fill="#0000ff"/><path d="M737.7,577.2L739.9,579.4L737.7,581.6L735.5,579.4Z" fill="#0000ff"/><path d="M764.1,549.2L766.3,551.4L764.1,553.6L761.9,551.4Z" fill="#0000ff"/><path d="M753.4,567.1L755.6,569.3L753.4,571.5L751.2,569.3Z" fill="#0000ff"/><path d="M744.3,575.6L746.5,577.8L744.3,580.0L742.1,577.8Z" fill="#0000ff"/><path d="M773.9,497.7L776.1,499.9L773.9,502.1L771.7,499.9Z" fill="#0000ff"/><path d="M741.7,573.0L743.9,575.2L741.7,577.4L739.5,575.2Z" fill="#0000ff"/><path d="M767.2,525.8L769.4,528.0L767.2,530.2L765.0,528.0Z" fill="#0000ff"/><path d="M778.4,522.0L780.6,524.2L778.4,526.4L776.2,524.2Z" fill="#0000ff"/><path d="M793.6,486.4L795.8,488.6L793.6,490.8L791.4,488.6Z" fill="#0000ff"/><path d="M741.3,557.4L743.5,559.6L741.3,561.8L739.1,559.6Z" fill="#0000ff"/><path d="M759.1,551.5L761.3,553.7L759.1,555.9L756.9,553.7Z" fill="#0000ff"/><path d="M747.4,576.9L749.6,579.1L747.4,581.3L745.2,579.1Z" fill="#0000ff"/><path d="M735.5,574.7L737.7,576.9L735.5,579.1L733.3,576.9Z" fill="#0000ff"/><path d="M768.9,518.0L771.1,520.2L768.9,522.4L766.7,520.2Z" fill="#0000ff"/><path d="M745.6,577.7L747.8,579.9L745.6,582.1L743.4,579.9Z" fill="#0000ff"/><path d="M740.3,564.0L742.5,566.2L740.3,568.4L738.1,566.2Z" fill="#0000ff"/><path d="M738.5,576.1L740.7,578.3L738.5,580.5L736.3,578.3Z" fill="#0000ff"/><path d="M743.0,577.6L745.2,579.8L743.0,582.0L740.8,579.8Z" fill="#0000ff"/><path d="M751.6,574.1L753.8,576.3L751.6,578.5L749.4,576.3Z" fill="#0000ff"/><path d="M754.5,576.9L756.7,579.1L754.5,581.3L752.3,579.1Z" fill="#0000ff"/><path d="M765.9,552.4L768.1,554.6L765.9,556.8L763.7,554.6Z" fill="#0000ff"/><path d="M750.0,576.9L752.2,579.1L750.0,581.3L747.8,579.1Z" fill="#0000ff"/><path d="M783.0,480.0L785.2,482.2L783.0,484.4L780.8,482.2Z" fill="#0000ff"/><path d="M746.8,570.3L749.0,572.5L746.8,574.7L744.6,572.5Z" fill="#0000ff"/><path d="M807.7,450.1L809.9,452.3L807.7,454.5L805.5,452.3Z" fill="#0000ff"/><path d="M794.1,447.2L796.3,449.4L794.1,451.6L791.9,449.4Z" fill="#0000ff"/><path d="M807.6,440.5L809.8,442.7L807.6,444.9L805.4,442.7Z" fill="#0000ff"/><path d="M756.7,553.1L758.9,555.3L756.7,557.5L754.5,555.3Z" fill="#0000ff"/><path d="M817.7,429.4L819.9,431.6L817.7,433.8L815.5,431.6Z" fill="#0000ff"/><path d="M781.9,521.7L784.1,523.9L781.9,526.1L779.7,523.9Z" fill="#0000ff"/><path d="M780.2,517.3L782.4,519.5L780.2,521.7L778.0,519.5Z" fill="#0000ff"/><path d="M741.4,565.9L743.6,568.1L741.4,570.3L739.2,568.1Z" fill="#0000ff"/><path d="M759.9,577.3L762.1,579.5L759.9,581.7L757.7,579.5Z" fill="#0000ff"/><path d="M734.1,575.6L736.3,577.8L734.1,580.0L731.9,577.8Z" fill="#0000ff"/><path d="M785.2,518.8L787.4,521.0L785.2,523.2L783.0,521.0Z" fill="#0000ff"/><path d="M766.1,532.5L768.3,534.7L766.1,536.9L763.9,534.7Z" fill="#0000ff"/><path d="M745.4,556.8L747.6,559.0L745.4,561.2L743.2,559.0Z" fill="#0000ff"/><path d="M754.6,570.8L756.8,573.0L754.6,575.2L752.4,573.0Z" fill="#0000ff"/><path d="M757.8,576.7L760.0,578.9L757.8,581.1L755.6,578.9Z" fill="#0000ff"/><path d="M760.3,561.4L762.5,563.6L760.3,565.8L758.1,563.6Z" fill="#0000ff"/><path d="M735.4,571.7L737.6,573.9L735.4,576.1L733.2,573.9Z" fill="#0000ff"/><path d="M759.6,555.2L761.8,557.4L759.6,559.6L757.4,557.4Z" fill="#0000ff"/><path d="M743.6,577.3L745.8,579.5L743.6,581.7L741.4,579.5Z" fill="#0000ff"/><path d="M768.8,520.2L771.0,522.4L768.8,524.6L766.6,522.4Z" fill="#0000ff"/><path d="M747.1,556.8L749.3,559.0L747.1,561.2L744.9,559.0Z" fill="#0000ff"/><path d="M766.0,548.2L768.2,550.4L766.0,552.6L763.8,550.4Z" fill="#0000ff"/><path d="M801.0,474.0L803.2,476.2L801.0,478.4L798.8,476.2Z" fill="#0000ff"/><path d="M748.3,577.7L750.5,579.9L748.3,582.1L746.1,579.9Z" fill="#0000ff"/><path d="M739.6,566.0L741.8,568.2L739.6,570.4L737.4,568.2Z" fill="#0000ff"/><path d="M756.9,547.0L759.1,549.2L756.9,551.4L754.7,549.2Z" fill="#0000ff"/><path d="M746.4,575.3L748.6,577.5L746.4,579.7L744.2,577.5Z" fill="#0000ff"/><path d="M735.4,576.3L737.6,578.5L735.4,580.7L733.2,578.5Z" fill="#0000ff"/><path d="M767.3,577.6L769.5,579.8L767.3,582.0L765.1,579.8Z" fill="#0000ff"/><path d="M734.8,570.8L737.0,573.0L734.8,575.2L732.6,573.0Z" fill="#0000ff"/><path d="M752.0,573.8L754.2,576.0L752.0,578.2L749.8,576.0Z" fill="#0000ff"/><path d="M745.1,566.3L747.3,568.5L745.1,570.7L742.9,568.5Z" fill="#0000ff"/><path d="M754.3,569.1L756.5,571.3L754.3,573.5L752.1,571.3Z" fill="#0000ff"/><path d="M735.3,574.2L737.5,576.4L735.3,578.6L733.1,576.4Z" fill="#0000ff"/><path d="M743.0,577.6L745.2,579.8L743.0,582.0L740.8,579.8Z" fill="#0000ff"/><path d="M740.8,573.3L743.0,575.5L740.8,577.7L738.6,575.5Z" fill="#0000ff"/><path d="M768.8,514.2L771.0,516.4L768.8,518.6L766.6,516.4Z" fill="#0000ff"/><path d="M750.3,537.7L752.5,539.9L750.3,542.1L748.1,539.9Z" fill="#0000ff"/><path d="M745.8,574.5L748.0,576.7L745.8,578.9L743.6,576.7Z" fill="#0000ff"/><path d="M796.1,504.9L798.3,507.1L796.1,509.3L793.9,507.1Z" fill="#0000ff"/><path d="M768.9,551.6L771.1,553.8L768.9,556.0L766.7,553.8Z" fill="#0000ff"/><path d="M754.9,567.4L757.1,569.6L754.9,571.8L752.7,569.6Z" fill="#0000ff"/><path d="M747.7,572.0L749.9,574.2L747.7,576.4L745.5,574.2Z" fill="#0000ff"/><path d="M739.7,577.5L741.9,579.7L739.7,581.9L737.5,579.7Z" fill="#0000ff"/><path d="M797.7,457.5L799.9,459.7L797.7,461.9L795.5,459.7Z" fill="#0000ff"/><path d="M760.3,577.7L762.5,579.9L760.3,582.1L758.1,579.9Z" fill="#0000ff"/><path d="M788.8,479.8L791.0,482.0L788.8,484.2L786.6,482.0Z" fill="#0000ff"/><path d="M743.0,577.7L745.2,579.9L743.0,582.1L740.8,579.9Z" fill="#0000ff"/><path d="M756.8,574.7L759.0,576.9L756.8,579.1L754.6,576.9Z" fill="#0000ff"/><path d="M765.9,577.5L768.1,579.7L765.9,581.9L763.7,579.7Z" fill="#0000ff"/><path d="M758.5,577.7L760.7,579.9L758.5,582.1L756.3,579.9Z" fill="#0000ff"/><path d="M746.2,577.0L748.4,579.2L746.2,581.4L744.0,579.2Z" fill="#0000ff"/><path d="M760.5,512.3L762.7,514.5L760.5,516.7L758.3,514.5Z" fill="#0000ff"/><path d="M752.8,543.7L755.0,545.9L752.8,548.1L750.6,545.9Z" fill="#0000ff"/><path d="M736.9,577.5L739.1,579.7L736.9,581.9L734.7,579.7Z" fill="#0000ff"/><path d="M747.8,534.9L750.0,537.1L747.8,539.3L745.6,537.1Z" fill="#0000ff"/><path d="M761.4,554.6L763.6,556.8L761.4,559.0L759.2,556.8Z" fill="#0000ff"/><path d="M757.9,565.2L760.1,567.4L757.9,569.6L755.7,567.4Z" fill="#0000ff"/><path d="M770.7,520.6L772.9,522.8L770.7,525.0L768.5,522.8Z" fill="#0000ff"/><path d="M740.4,564.5L742.6,566.7L740.4,568.9L738.2,566.7Z" fill="#0000ff"/><path d="M781.7,519.1L783.9,521.3L781.7,523.5L779.5,521.3Z" fill="#0000ff"/><path d="M747.9,564.2L750.1,566.4L747.9,568.6L745.7,566.4Z" fill="#0000ff"/><path d="M749.4,576.3L751.6,578.5L749.4,580.7L747.2,578.5Z" fill="#0000ff"/><path d="M759.1,547.0L761.3,549.2L759.1,551.4L756.9,549.2Z" fill="#0000ff"/><path d="M750.2,577.1L752.4,579.3L750.2,581.5L748.0,579.3Z" fill="#0000ff"/><path d="M739.2,576.0L741.4,578.2L739.2,580.4L737.0,578.2Z" fill="#0000ff"/><path d="M743.6,575.7L745.8,577.9L743.6,580.1L741.4,577.9Z" fill="#0000ff"/><path d="M769.5,517.2L771.7,519.4L769.5,521.6L767.3,519.4Z" fill="#0000ff"/><path d="M739.5,576.6L741.7,578.8L739.5,581.0L737.3,578.8Z" fill="#0000ff"/><path d="M737.5,576.9L739.7,579.1L737.5,581.3L735.3,579.1Z" fill="#0000ff"/><path d="M735.2,577.6L737.4,579.8L735.2,582.0L733.0,579.8Z" fill="#0000ff"/><path d="M738.9,564.0L741.1,566.2L738.9,568.4L736.7,566.2Z" fill="#0000ff"/><path d="M746.4,576.9L748.6,579.1L746.4,581.3L744.2,579.1Z" fill="#0000ff"/><path d="M765.7,540.9L767.9,543.1L765.7,545.3L763.5,543.1Z" fill="#0000ff"/><path d="M788.3,471.4L790.5,473.6L788.3,475.8L786.1,473.6Z" fill="#0000ff"/><path d="M777.8,526.7L780.0,528.9L777.8,531.1L775.6,528.9Z" fill="#0000ff"/><path d="M805.7,468.0L807.9,470.2L805.7,472.4L803.5,470.2Z" fill="#0000ff"/><path d="M750.5,549.7L752.7,551.9L750.5,554.1L748.3,551.9Z" fill="#0000ff"/><path d="M750.9,577.4L753.1,579.6L750.9,581.8L748.7,579.6Z" fill="#0000ff"/><path d="M738.8,574.2L741.0,576.4L738.8,578.6L736.6,576.4Z" fill="#0000ff"/><path d="M749.8,574.2L752.0,576.4L749.8,578.6L747.6,576.4Z" fill="#0000ff"/><path d="M756.4,576.2L758.6,578.4L756.4,580.6L754.2,578.4Z" fill="#0000ff"/><path d="M805.9,451.9L808.1,454.1L805.9,456.3L803.7,454.1Z" fill="#0000ff"/><path d="M742.3,574.6L744.5,576.8L742.3,579.0L740.1,576.8Z" fill="#0000ff"/><path d="M743.0,557.0L745.2,559.2L743.0,561.4L740.8,559.2Z" fill="#0000ff"/><path d="M753.6,574.8L755.8,577.0L753.6,579.2L751.4,577.0Z" fill="#0000ff"/><path d="M799.9,453.5L802.1,455.7L799.9,457.9L797.7,455.7Z" fill="#0000ff"/><path d="M743.6,576.1L745.8,578.3L743.6,580.5L741.4,578.3Z" fill="#0000ff"/><path d="M762.8,577.3L765.0,579.5L762.8,581.7L760.6,579.5Z" fill="#0000ff"/><path d="M740.9,555.0L743.1,557.2L740.9,559.4L738.7,557.2Z" fill="#0000ff"/><path d="M755.0,568.3L757.2,570.5L755.0,572.7L752.8,570.5Z" fill="#0000ff"/><path d="M743.0,575.1L745.2,577.3L743.0,579.5L740.8,577.3Z" fill="#0000ff"/><path d="M741.6,576.9L743.8,579.1L741.6,581.3L739.4,579.1Z" fill="#0000ff"/><path d="M758.6,577.6L760.8,579.8L758.6,582.0L756.4,579.8Z" fill="#0000ff"/><path d="M740.9,570.2L743.1,572.4L740.9,574.6L738.7,572.4Z" fill="#0000ff"/><path d="M736.8,576.0L739.0,578.2L736.8,580.4L734.6,578.2Z" fill="#0000ff"/><path d="M743.9,575.3L746.1,577.5L743.9,579.7L741.7,577.5Z" fill="#0000ff"/><path d="M752.0,573.7L754.2,575.9L752.0,578.1L749.8,575.9Z" fill="#0000ff"/><path d="M740.3,574.2L742.5,576.4L740.3,578.6L738.1,576.4Z" fill="#0000ff"/><path d="M751.6,575.0L753.8,577.2L751.6,579.4L749.4,577.2Z" fill="#0000ff"/><path d="M776.0,509.5L778.2,511.7L776.0,513.9L773.8,511.7Z" fill="#0000ff"/><path d="M736.3,577.5L738.5,579.7L736.3,581.9L734.1,579.7Z" fill="#0000ff"/><path d="M776.4,487.5L778.6,489.7L776.4,491.9L774.2,489.7Z" fill="#0000ff"/><path d="M793.4,488.0L795.6,490.2L793.4,492.4L791.2,490.2Z" fill="#0000ff"/><path d="M759.4,572.2L761.6,574.4L759.4,576.6L757.2,574.4Z" fill="#0000ff"/><path d="M750.6,563.9L752.8,566.1L750.6,568.3L748.4,566.1Z" fill="#0000ff"/><path d="M747.8,566.4L750.0,568.6L747.8,570.8L745.6,568.6Z" fill="#0000ff"/><path d="M805.0,431.4L807.2,433.6L805.0,435.8L802.8,433.6Z" fill="#0000ff"/><path d="M790.2,480.8L792.4,483.0L790.2,485.2L788.0,483.0Z" fill="#0000ff"/><path d="M739.7,577.6L741.9,579.8L739.7,582.0L737.5,579.8Z" fill="#0000ff"/><path d="M782.3,504.5L784.5,506.7L782.3,508.9L780.1,506.7Z" fill="#0000ff"/><path d="M758.4,534.8L760.6,537.0L758.4,539.2L756.2,537.0Z" fill="#0000ff"/><path d="M790.4,471.3L792.6,473.5L790.4,475.7L788.2,473.5Z" fill="#0000ff"/><path d="M743.9,577.6L746.1,579.8L743.9,582.0L741.7,579.8Z" fill="#0000ff"/><path d="M759.2,577.7L761.4,579.9L759.2,582.1L757.0,579.9Z" fill="#0000ff"/><path d="M752.5,576.3L754.7,578.5L752.5,580.7L750.3,578.5Z" fill="#0000ff"/><path d="M762.3,528.6L764.5,530.8L762.3,533.0L760.1,530.8Z" fill="#0000ff"/><path d="M757.2,545.5L759.4,547.7L757.2,549.9L755.0,547.7Z" fill="#0000ff"/><path d="M745.1,577.0L747.3,579.2L745.1,581.4L742.9,579.2Z" fill="#0000ff"/><path d="M802.9,437.0L805.1,439.2L802.9,441.4L800.7,439.2Z" fill="#0000ff"/><path d="M782.6,487.8L784.8,490.0L782.6,492.2L780.4,490.0Z" fill="#0000ff"/><path d="M762.5,559.5L764.7,561.7L762.5,563.9L760.3,561.7Z" fill="#0000ff"/><path d="M790.4,503.2L792.6,505.4L790.4,507.6L788.2,505.4Z" fill="#0000ff"/><path d="M756.9,575.3L759.1,577.5L756.9,579.7L754.7,577.5Z" fill="#0000ff"/><path d="M767.0,567.5L769.2,569.7L767.0,571.9L764.8,569.7Z" fill="#0000ff"/><path d="M747.8,559.6L750.0,561.8L747.8,564.0L745.6,561.8Z" fill="#0000ff"/><path d="M781.4,513.1L783.6,515.3L781.4,517.5L779.2,515.3Z" fill="#0000ff"/><path d="M760.4,574.9L762.6,577.1L760.4,579.3L758.2,577.1Z" fill="#0000ff"/><path d="M748.6,549.7L750.8,551.9L748.6,554.1L746.4,551.9Z" fill="#0000ff"/><path d="M804.4,442.2L806.6,444.4L804.4,446.6L802.2,444.4Z" fill="#0000ff"/><path d="M751.8,572.8L754.0,575.0L751.8,577.2L749.6,575.0Z" fill="#0000ff"/><path d="M741.6,572.1L743.8,574.3L741.6,576.5L739.4,574.3Z" fill="#0000ff"/><path d="M751.6,538.1L753.8,540.3L751.6,542.5L749.4,540.3Z" fill="#0000ff"/><path d="M745.7,546.0L747.9,548.2L745.7,550.4L743.5,548.2Z" fill="#0000ff"/><path d="M781.2,493.1L783.4,495.3L781.2,497.5L779.0,495.3Z" fill="#0000ff"/><path d="M778.0,507.5L780.2,509.7L778.0,511.9L775.8,509.7Z" fill="#0000ff"/><path d="M746.8,563.4L749.0,565.6L746.8,567.8L744.6,565.6Z" fill="#0000ff"/><path d="M765.4,527.1L767.6,529.3L765.4,531.5L763.2,529.3Z" fill="#0000ff"/><path d="M759.3,554.5L761.5,556.7L759.3,558.9L757.1,556.7Z" fill="#0000ff"/><path d="M753.3,577.7L755.5,579.9L753.3,582.1L751.1,579.9Z" fill="#0000ff"/><path d="M773.0,566.1L775.2,568.3L773.0,570.5L770.8,568.3Z" fill="#0000ff"/><path d="M752.3,575.1L754.5,577.3L752.3,579.5L750.1,577.3Z" fill="#0000ff"/><path d="M734.1,577.7L736.3,579.9L734.1,582.1L731.9,579.9Z" fill="#0000ff"/><path d="M752.4,563.0L754.6,565.2L752.4,567.4L750.2,565.2Z" fill="#0000ff"/><path d="M739.3,574.9L741.5,577.1L739.3,579.3L737.1,577.1Z" fill="#0000ff"/><path d="M763.2,551.2L765.4,553.4L763.2,555.6L761.0,553.4Z" fill="#0000ff"/><path d="M738.8,573.1L741.0,575.3L738.8,577.5L736.6,575.3Z" fill="#0000ff"/><path d="M744.1,555.7L746.3,557.9L744.1,560.1L741.9,557.9Z" fill="#0000ff"/><path d="M744.6,577.2L746.8,579.4L744.6,581.6L742.4,579.4Z" fill="#0000ff"/><path d="M740.6,577.6L742.8,579.8L740.6,582.0L738.4,579.8Z" fill="#0000ff"/><path d="M761.9,527.3L764.1,529.5L761.9,531.7L759.7,529.5Z" fill="#0000ff"/><path d="M750.4,577.7L752.6,579.9L750.4,582.1L748.2,579.9Z" fill="#0000ff"/><path d="M776.8,577.4L779.0,579.6L776.8,581.8L774.6,579.6Z" fill="#0000ff"/><path d="M751.7,576.1L753.9,578.3L751.7,580.5L749.5,578.3Z" fill="#0000ff"/><path d="M735.8,577.4L738.0,579.6L735.8,581.8L733.6,579.6Z" fill="#0000ff"/><path d="M782.7,529.3L784.9,531.5L782.7,533.7L780.5,531.5Z" fill="#0000ff"/><path d="M789.3,454.5L791.5,456.7L789.3,458.9L787.1,456.7Z" fill="#0000ff"/><path d="M756.6,545.9L758.8,548.1L756.6,550.3L754.4,548.1Z" fill="#0000ff"/><path d="M754.0,577.5L756.2,579.7L754.0,581.9L751.8,579.7Z" fill="#0000ff"/><path d="M777.2,503.6L779.4,505.8L777.2,508.0L775.0,505.8Z" fill="#0000ff"/><path d="M779.7,476.5L781.9,478.7L779.7,480.9L777.5,478.7Z" fill="#0000ff"/><path d="M771.4,532.6L773.6,534.8L771.4,537.0L769.2,534.8Z" fill="#0000ff"/><path d="M749.7,571.9L751.9,574.1L749.7,576.3L747.5,574.1Z" fill="#0000ff"/><path d="M760.4,536.1L762.6,538.3L760.4,540.5L758.2,538.3Z" fill="#0000ff"/><path d="M754.9,561.0L757.1,563.2L754.9,565.4L752.7,563.2Z" fill="#0000ff"/><path d="M739.4,572.5L741.6,574.7L739.4,576.9L737.2,574.7Z" fill="#0000ff"/><path d="M759.7,576.5L761.9,578.7L759.7,580.9L757.5,578.7Z" fill="#0000ff"/><path d="M750.0,563.3L752.2,565.5L750.0,567.7L747.8,565.5Z" fill="#0000ff"/><path d="M775.1,553.3L777.3,555.5L775.1,557.7L772.9,555.5Z" fill="#0000ff"/><path d="M750.4,550.9L752.6,553.1L750.4,555.3L748.2,553.1Z" fill="#0000ff"/><path d="M799.2,474.2L801.4,476.4L799.2,478.6L797.0,476.4Z" fill="#0000ff"/><path d="M744.3,570.6L746.5,572.8L744.3,575.0L742.1,572.8Z" fill="#0000ff"/><path d="M765.7,515.5L767.9,517.7L765.7,519.9L763.5,517.7Z" fill="#0000ff"/><path d="M774.8,494.9L777.0,497.1L774.8,499.3L772.6,497.1Z" fill="#0000ff"/><path d="M782.6,537.7L784.8,539.9L782.6,542.1L780.4,539.9Z" fill="#0000ff"/><path d="M746.1,554.6L748.3,556.8L746.1,559.0L743.9,556.8Z" fill="#0000ff"/><path d="M738.4,575.2L740.6,577.4L738.4,579.6L736.2,577.4Z" fill="#0000ff"/><path d="M789.6,473.6L791.8,475.8L789.6,478.0L787.4,475.8Z" fill="#0000ff"/><path d="M775.0,522.3L777.2,524.5L775.0,526.7L772.8,524.5Z" fill="#0000ff"/><path d="M758.0,539.6L760.2,541.8L758.0,544.0L755.8,541.8Z" fill="#0000ff"/><path d="M736.6,571.6L738.8,573.8L736.6,576.0L734.4,573.8Z" fill="#0000ff"/><path d="M749.4,566.6L751.6,568.8L749.4,571.0L747.2,568.8Z" fill="#0000ff"/><path d="M784.2,448.4L786.4,450.6L784.2,452.8L782.0,450.6Z" fill="#0000ff"/><path d="M738.0,577.7L740.2,579.9L738.0,582.1L735.8,579.9Z" fill="#0000ff"/><path d="M752.6,545.0L754.8,547.2L752.6,549.4L750.4,547.2Z" fill="#0000ff"/><path d="M757.9,577.5L760.1,579.7L757.9,581.9L755.7,579.7Z" fill="#0000ff"/><path d="M750.3,575.9L752.5,578.1L750.3,580.3L748.1,578.1Z" fill="#0000ff"/><path d="M760.2,516.1L762.4,518.3L760.2,520.5L758.0,518.3Z" fill="#0000ff"/><path d="M762.7,559.3L764.9,561.5L762.7,563.7L760.5,561.5Z" fill="#0000ff"/><path d="M758.2,514.8L760.4,517.0L758.2,519.2L756.0,517.0Z" fill="#0000ff"/><path d="M743.6,576.2L745.8,578.4L743.6,580.6L741.4,578.4Z" fill="#0000ff"/><path d="M748.8,568.7L751.0,570.9L748.8,573.1L746.6,570.9Z" fill="#0000ff"/><path d="M761.9,544.8L764.1,547.0L761.9,549.2L759.7,547.0Z" fill="#0000ff"/><path d="M784.1,469.0L786.3,471.2L784.1,473.4L781.9,471.2Z" fill="#0000ff"/><path d="M752.5,577.6L754.7,579.8L752.5,582.0L750.3,579.8Z" fill="#0000ff"/><path d="M777.0,511.7L779.2,513.9L777.0,516.1L774.8,513.9Z" fill="#0000ff"/><path d="M744.9,556.8L747.1,559.0L744.9,561.2L742.7,559.0Z" fill="#0000ff"/><path d="M766.6,515.3L768.8,517.5L766.6,519.7L764.4,517.5Z" fill="#0000ff"/><path d="M750.3,552.0L752.5,554.2L750.3,556.4L748.1,554.2Z" fill="#0000ff"/><path d="M821.8,426.2L824.0,428.4L821.8,430.6L819.6,428.4Z" fill="#0000ff"/><path d="M748.8,577.7L751.0,579.9L748.8,582.1L746.6,579.9Z" fill="#0000ff"/><path d="M762.3,576.9L764.5,579.1L762.3,581.3L760.1,579.1Z" fill="#0000ff"/><path d="M784.2,513.1L786.4,515.3L784.2,517.5L782.0,515.3Z" fill="#0000ff"/><path d="M791.2,468.3L793.4,470.5L791.2,472.7L789.0,470.5Z" fill="#0000ff"/><path d="M741.1,576.8L743.3,579.0L741.1,581.2L738.9,579.0Z" fill="#0000ff"/><path d="M749.6,577.7L751.8,579.9L749.6,582.1L747.4,579.9Z" fill="#0000ff"/><path d="M757.2,554.6L759.4,556.8L757.2,559.0L755.0,556.8Z" fill="#0000ff"/><path d="M743.3,566.9L745.5,569.1L743.3,571.3L741.1,569.1Z" fill="#0000ff"/><path d="M742.2,572.8L744.4,575.0L742.2,577.2L740.0,575.0Z" fill="#0000ff"/><path d="M746.7,576.3L748.9,578.5L746.7,580.7L744.5,578.5Z" fill="#0000ff"/><path d="M763.9,575.4L766.1,577.6L763.9,579.8L761.7,577.6Z" fill="#0000ff"/><path d="M765.7,545.2L767.9,547.4L765.7,549.6L763.5,547.4Z" fill="#0000ff"/><path d="M753.8,572.6L756.0,574.8L753.8,577.0L751.6,574.8Z" fill="#0000ff"/><path d="M757.4,577.7L759.6,579.9L757.4,582.1L755.2,579.9Z" fill="#0000ff"/><path d="M787.4,508.5L789.6,510.7L787.4,512.9L785.2,510.7Z" fill="#0000ff"/><path d="M762.3,530.3L764.5,532.5L762.3,534.7L760.1,532.5Z" fill="#0000ff"/><path d="M747.3,577.6L749.5,579.8L747.3,582.0L745.1,579.8Z" fill="#0000ff"/><path d="M762.2,565.6L764.4,567.8L762.2,570.0L760.0,567.8Z" fill="#0000ff"/><path d="M766.9,520.0L769.1,522.2L766.9,524.4L764.7,522.2Z" fill="#0000ff"/><path d="M753.5,576.5L755.7,578.7L753.5,580.9L751.3,578.7Z" fill="#0000ff"/><path d="M744.6,577.5L746.8,579.7L744.6,581.9L742.4,579.7Z" fill="#0000ff"/><path d="M780.2,471.8L782.4,474.0L780.2,476.2L778.0,474.0Z" fill="#0000ff"/><path d="M753.0,577.5L755.2,579.7L753.0,581.9L750.8,579.7Z" fill="#0000ff"/><path d="M767.4,568.9L769.6,571.1L767.4,573.3L765.2,571.1Z" fill="#0000ff"/><path d="M757.2,577.7L759.4,579.9L757.2,582.1L755.0,579.9Z" fill="#0000ff"/><path d="M756.0,576.3L758.2,578.5L756.0,580.7L753.8,578.5Z" fill="#0000ff"/><path d="M761.7,575.0L763.9,577.2L761.7,579.4L759.5,577.2Z" fill="#0000ff"/><path d="M769.3,550.0L771.5,552.2L769.3,554.4L767.1,552.2Z" fill="#0000ff"/><path d="M806.2,450.2L808.4,452.4L806.2,454.6L804.0,452.4Z" fill="#0000ff"/><path d="M749.2,577.7L751.4,579.9L749.2,582.1L747.0,579.9Z" fill="#0000ff"/><path d="M751.6,527.4L753.8,529.6L751.6,531.8L749.4,529.6Z" fill="#0000ff"/><path d="M766.7,496.1L768.9,498.3L766.7,500.5L764.5,498.3Z" fill="#0000ff"/><path d="M754.7,571.0L756.9,573.2L754.7,575.4L752.5,573.2Z" fill="#0000ff"/><path d="M755.9,576.8L758.1,579.0L755.9,581.2L753.7,579.0Z" fill="#0000ff"/><path d="M734.8,574.0L737.0,576.2L734.8,578.4L732.6,576.2Z" fill="#0000ff"/><path d="M742.8,577.3L745.0,579.5L742.8,581.7L740.6,579.5Z" fill="#0000ff"/><path d="M750.7,532.2L752.9,534.4L750.7,536.6L748.5,534.4Z" fill="#0000ff"/><path d="M760.1,533.6L762.3,535.8L760.1,538.0L757.9,535.8Z" fill="#0000ff"/><path d="M736.9,559.9L739.1,562.1L736.9,564.3L734.7,562.1Z" fill="#0000ff"/><path d="M797.6,464.1L799.8,466.3L797.6,468.5L795.4,466.3Z" fill="#0000ff"/><path d="M775.6,499.3L777.8,501.5L775.6,503.7L773.4,501.5Z" fill="#0000ff"/><path d="M734.5,577.2L736.7,579.4L734.5,581.6L732.3,579.4Z" fill="#0000ff"/><path d="M805.5,434.2L807.7,436.4L805.5,438.6L803.3,436.4Z" fill="#0000ff"/><path d="M735.9,570.2L738.1,572.4L735.9,574.6L733.7,572.4Z" fill="#0000ff"/><path d="M743.7,574.6L745.9,576.8L743.7,579.0L741.5,576.8Z" fill="#0000ff"/><path d="M759.7,548.1L761.9,550.3L759.7,552.5L757.5,550.3Z" fill="#0000ff"/><path d="M803.5,438.4L805.7,440.6L803.5,442.8L801.3,440.6Z" fill="#0000ff"/><path d="M752.2,575.8L754.4,578.0L752.2,580.2L750.0,578.0Z" fill="#0000ff"/><path d="M788.2,490.9L790.4,493.1L788.2,495.3L786.0,493.1Z" fill="#0000ff"/><path d="M795.6,480.8L797.8,483.0L795.6,485.2L793.4,483.0Z" fill="#0000ff"/><path d="M756.7,562.3L758.9,564.5L756.7,566.7L754.5,564.5Z" fill="#0000ff"/><path d="M740.6,574.8L742.8,577.0L740.6,579.2L738.4,577.0Z" fill="#0000ff"/><path d="M771.7,506.9L773.9,509.1L771.7,511.3L769.5,509.1Z" fill="#0000ff"/><path d="M767.1,550.1L769.3,552.3L767.1,554.5L764.9,552.3Z" fill="#0000ff"/><path d="M754.7,559.7L756.9,561.9L754.7,564.1L752.5,561.9Z" fill="#0000ff"/><path d="M749.0,571.5L751.2,573.7L749.0,575.9L746.8,573.7Z" fill="#0000ff"/><path d="M741.3,577.7L743.5,579.9L741.3,582.1L739.1,579.9Z" fill="#0000ff"/><path d="M755.0,569.4L757.2,571.6L755.0,573.8L752.8,571.6Z" fill="#0000ff"/><path d="M758.9,577.2L761.1,579.4L758.9,581.6L756.7,579.4Z" fill="#0000ff"/><path d="M747.9,534.8L750.1,537.0L747.9,539.2L745.7,537.0Z" fill="#0000ff"/><path d="M748.6,544.6L750.8,546.8L748.6,549.0L746.4,546.8Z" fill="#0000ff"/><path d="M743.9,550.8L746.1,553.0L743.9,555.2L741.7,553.0Z" fill="#0000ff"/><path d="M764.3,517.1L766.5,519.3L764.3,521.5L762.1,519.3Z" fill="#0000ff"/><path d="M816.7,429.3L818.9,431.5L816.7,433.7L814.5,431.5Z" fill="#0000ff"/><path d="M735.7,577.6L737.9,579.8L735.7,582.0L733.5,579.8Z" fill="#0000ff"/><path d="M739.9,577.7L742.1,579.9L739.9,582.1L737.7,579.9Z" fill="#0000ff"/><path d="M748.5,569.9L750.7,572.1L748.5,574.3L746.3,572.1Z" fill="#0000ff"/><path d="M742.4,577.6L744.6,579.8L742.4,582.0L740.2,579.8Z" fill="#0000ff"/><path d="M782.1,483.5L784.3,485.7L782.1,487.9L779.9,485.7Z" fill="#0000ff"/><path d="M763.3,555.8L765.5,558.0L763.3,560.2L761.1,558.0Z" fill="#0000ff"/><path d="M749.4,576.2L751.6,578.4L749.4,580.6L747.2,578.4Z" fill="#0000ff"/><path d="M798.5,491.4L800.7,493.6L798.5,495.8L796.3,493.6Z" fill="#0000ff"/><path d="M736.8,571.7L739.0,573.9L736.8,576.1L734.6,573.9Z" fill="#0000ff"/><path d="M738.8,577.6L741.0,579.8L738.8,582.0L736.6,579.8Z" fill="#0000ff"/><path d="M749.4,577.2L751.6,579.4L749.4,581.6L747.2,579.4Z" fill="#0000ff"/><path d="M776.0,478.0L778.2,480.2L776.0,482.4L773.8,480.2Z" fill="#0000ff"/><path d="M746.8,559.6L749.0,561.8L746.8,564.0L744.6,561.8Z" fill="#0000ff"/><path d="M757.0,570.3L759.2,572.5L757.0,574.7L754.8,572.5Z" fill="#0000ff"/><path d="M801.3,462.8L803.5,465.0L801.3,467.2L799.1,465.0Z" fill="#0000ff"/><path d="M795.5,493.1L797.7,495.3L795.5,497.5L793.3,495.3Z" fill="#0000ff"/><path d="M750.9,577.6L753.1,579.8L750.9,582.0L748.7,579.8Z" fill="#0000ff"/><path d="M819.4,428.0L821.6,430.2L819.4,432.4L817.2,430.2Z" fill="#0000ff"/><path d="M777.7,515.9L779.9,518.1L777.7,520.3L775.5,518.1Z" fill="#0000ff"/><path d="M739.2,577.7L741.4,579.9L739.2,582.1L737.0,579.9Z" fill="#0000ff"/><path d="M753.0,573.6L755.2,575.8L753.0,578.0L750.8,575.8Z" fill="#0000ff"/><path d="M786.7,483.6L788.9,485.8L786.7,488.0L784.5,485.8Z" fill="#0000ff"/><path d="M737.5,577.0L739.7,579.2L737.5,581.4L735.3,579.2Z" fill="#0000ff"/><path d="M748.6,553.8L750.8,556.0L748.6,558.2L746.4,556.0Z" fill="#0000ff"/><path d="M743.7,576.9L745.9,579.1L743.7,581.3L741.5,579.1Z" fill="#0000ff"/><path d="M812.1,433.9L814.3,436.1L812.1,438.3L809.9,436.1Z" fill="#0000ff"/><path d="M768.0,535.0L770.2,537.2L768.0,539.4L765.8,537.2Z" fill="#0000ff"/><path d="M790.6,492.4L792.8,494.6L790.6,496.8L788.4,494.6Z" fill="#0000ff"/><path d="M799.7,462.8L801.9,465.0L799.7,467.2L797.5,465.0Z" fill="#0000ff"/><path d="M745.3,567.0L747.5,569.2L745.3,571.4L743.1,569.2Z" fill="#0000ff"/><path d="M739.1,577.4L741.3,579.6L739.1,581.8L736.9,579.6Z" fill="#0000ff"/><path d="M755.0,576.7L757.2,578.9L755.0,581.1L752.8,578.9Z" fill="#0000ff"/><path d="M755.6,574.0L757.8,576.2L755.6,578.4L753.4,576.2Z" fill="#0000ff"/><path d="M791.4,485.1L793.6,487.3L791.4,489.5L789.2,487.3Z" fill="#0000ff"/><path d="M750.6,575.9L752.8,578.1L750.6,580.3L748.4,578.1Z" fill="#0000ff"/><path d="M749.4,577.7L751.6,579.9L749.4,582.1L747.2,579.9Z" fill="#0000ff"/><path d="M783.0,483.5L785.2,485.7L783.0,487.9L780.8,485.7Z" fill="#0000ff"/><path d="M762.6,575.9L764.8,578.1L762.6,580.3L760.4,578.1Z" fill="#0000ff"/><path d="M753.8,577.6L756.0,579.8L753.8,582.0L751.6,579.8Z" fill="#0000ff"/><path d="M796.7,486.2L798.9,488.4L796.7,490.6L794.5,488.4Z" fill="#0000ff"/><path d="M745.9,575.5L748.1,577.7L745.9,579.9L743.7,577.7Z" fill="#0000ff"/><path d="M743.8,576.3L746.0,578.5L743.8,580.7L741.6,578.5Z" fill="#0000ff"/><path d="M746.6,561.3L748.8,563.5L746.6,565.7L744.4,563.5Z" fill="#0000ff"/><path d="M787.4,465.8L789.6,468.0L787.4,470.2L785.2,468.0Z" fill="#0000ff"/><path d="M751.0,576.6L753.2,578.8L751.0,581.0L748.8,578.8Z" fill="#0000ff"/><path d="M795.2,474.6L797.4,476.8L795.2,479.0L793.0,476.8Z" fill="#0000ff"/><path d="M765.4,567.1L767.6,569.3L765.4,571.5L763.2,569.3Z" fill="#0000ff"/><path d="M743.5,576.3L745.7,578.5L743.5,580.7L741.3,578.5Z" fill="#0000ff"/><path d="M746.8,561.3L749.0,563.5L746.8,565.7L744.6,563.5Z" fill="#0000ff"/><path d="M751.8,576.2L754.0,578.4L751.8,580.6L749.6,578.4Z" fill="#0000ff"/><path d="M742.5,548.3L744.7,550.5L742.5,552.7L740.3,550.5Z" fill="#0000ff"/><path d="M749.1,575.4L751.3,577.6L749.1,579.8L746.9,577.6Z" fill="#0000ff"/><path d="M765.6,565.4L767.8,567.6L765.6,569.8L763.4,567.6Z" fill="#0000ff"/><path d="M742.8,576.5L745.0,578.7L742.8,580.9L740.6,578.7Z" fill="#0000ff"/><path d="M759.5,567.3L761.7,569.5L759.5,571.7L757.3,569.5Z" fill="#0000ff"/><path d="M753.6,576.0L755.8,578.2L753.6,580.4L751.4,578.2Z" fill="#0000ff"/><path d="M757.1,558.7L759.3,560.9L757.1,563.1L754.9,560.9Z" fill="#0000ff"/><path d="M737.8,577.6L740.0,579.8L737.8,582.0L735.6,579.8Z" fill="#0000ff"/><path d="M764.1,577.7L766.3,579.9L764.1,582.1L761.9,579.9Z" fill="#0000ff"/><path d="M746.9,539.7L749.1,541.9L746.9,544.1L744.7,541.9Z" fill="#0000ff"/><path d="M737.8,576.3L740.0,578.5L737.8,580.7L735.6,578.5Z" fill="#0000ff"/><path d="M755.4,577.7L757.6,579.9L755.4,582.1L753.2,579.9Z" fill="#0000ff"/><path d="M753.2,568.4L755.4,570.6L753.2,572.8L751.0,570.6Z" fill="#0000ff"/><path d="M747.3,548.4L749.5,550.6L747.3,552.8L745.1,550.6Z" fill="#0000ff"/><path d="M760.5,566.1L762.7,568.3L760.5,570.5L758.3,568.3Z" fill="#0000ff"/><path d="M754.7,561.6L756.9,563.8L754.7,566.0L752.5,563.8Z" fill="#0000ff"/><path d="M743.3,576.1L745.5,578.3L743.3,580.5L741.1,578.3Z" fill="#0000ff"/><path d="M751.8,575.2L754.0,577.4L751.8,579.6L749.6,577.4Z" fill="#0000ff"/><path d="M745.3,570.2L747.5,572.4L745.3,574.6L743.1,572.4Z" fill="#0000ff"/><path d="M757.2,561.4L759.4,563.6L757.2,565.8L755.0,563.6Z" fill="#0000ff"/><path d="M737.6,577.6L739.8,579.8L737.6,582.0L735.4,579.8Z" fill="#0000ff"/><path d="M780.8,530.6L783.0,532.8L780.8,535.0L778.6,532.8Z" fill="#0000ff"/><path d="M806.9,464.4L809.1,466.6L806.9,468.8L804.7,466.6Z" fill="#0000ff"/><path d="M744.4,542.6L746.6,544.8L744.4,547.0L742.2,544.8Z" fill="#0000ff"/><path d="M755.0,539.6L757.2,541.8L755.0,544.0L752.8,541.8Z" fill="#0000ff"/><path d="M789.9,484.5L792.1,486.7L789.9,488.9L787.7,486.7Z" fill="#0000ff"/><path d="M768.1,550.4L770.3,552.6L768.1,554.8L765.9,552.6Z" fill="#0000ff"/><path d="M782.4,482.8L784.6,485.0L782.4,487.2L780.2,485.0Z" fill="#0000ff"/><path d="M752.2,530.8L754.4,533.0L752.2,535.2L750.0,533.0Z" fill="#0000ff"/><path d="M790.9,500.8L793.1,503.0L790.9,505.2L788.7,503.0Z" fill="#0000ff"/><path d="M739.7,575.4L741.9,577.6L739.7,579.8L737.5,577.6Z" fill="#0000ff"/><path d="M754.8,548.9L757.0,551.1L754.8,553.3L752.6,551.1Z" fill="#0000ff"/><path d="M785.0,477.4L787.2,479.6L785.0,481.8L782.8,479.6Z" fill="#0000ff"/><path d="M740.5,567.3L742.7,569.5L740.5,571.7L738.3,569.5Z" fill="#0000ff"/><path d="M740.9,575.0L743.1,577.2L740.9,579.4L738.7,577.2Z" fill="#0000ff"/><path d="M748.4,577.7L750.6,579.9L748.4,582.1L746.2,579.9Z" fill="#0000ff"/><path d="M742.4,577.6L744.6,579.8L742.4,582.0L740.2,579.8Z" fill="#0000ff"/><path d="M735.0,571.6L737.2,573.8L735.0,576.0L732.8,573.8Z" fill="#0000ff"/><path d="M739.6,574.1L741.8,576.3L739.6,578.5L737.4,576.3Z" fill="#0000ff"/><path d="M741.8,577.7L744.0,579.9L741.8,582.1L739.6,579.9Z" fill="#0000ff"/><path d="M759.1,574.6L761.3,576.8L759.1,579.0L756.9,576.8Z" fill="#0000ff"/><path d="M740.2,571.5L742.4,573.7L740.2,575.9L738.0,573.7Z" fill="#0000ff"/><path d="M792.1,510.0L794.3,512.2L792.1,514.4L789.9,512.2Z" fill="#0000ff"/><path d="M772.1,515.8L774.3,518.0L772.1,520.2L769.9,518.0Z" fill="#0000ff"/><path d="M804.0,454.8L806.2,457.0L804.0,459.2L801.8,457.0Z" fill="#0000ff"/><path d="M752.7,577.5L754.9,579.7L752.7,581.9L750.5,579.7Z" fill="#0000ff"/><path d="M771.5,508.9L773.7,511.1L771.5,513.3L769.3,511.1Z" fill="#0000ff"/><path d="M770.6,507.0L772.8,509.2L770.6,511.4L768.4,509.2Z" fill="#0000ff"/><path d="M761.3,539.6L763.5,541.8L761.3,544.0L759.1,541.8Z" fill="#0000ff"/><path d="M753.0,575.0L755.2,577.2L753.0,579.4L750.8,577.2Z" fill="#0000ff"/><path d="M819.0,423.8L821.2,426.0L819.0,428.2L816.8,426.0Z" fill="#0000ff"/><path d="M798.8,469.4L801.0,471.6L798.8,473.8L796.6,471.6Z" fill="#0000ff"/><path d="M808.0,446.3L810.2,448.5L808.0,450.7L805.8,448.5Z" fill="#0000ff"/><path d="M810.2,426.5L812.4,428.7L810.2,430.9L808.0,428.7Z" fill="#0000ff"/><path d="M779.5,461.6L781.7,463.8L779.5,466.0L777.3,463.8Z" fill="#0000ff"/><path d="M753.4,577.7L755.6,579.9L753.4,582.1L751.2,579.9Z" fill="#0000ff"/><path d="M756.3,550.4L758.5,552.6L756.3,554.8L754.1,552.6Z" fill="#0000ff"/><path d="M739.9,576.1L742.1,578.3L739.9,580.5L737.7,578.3Z" fill="#0000ff"/><path d="M765.4,550.2L767.6,552.4L765.4,554.6L763.2,552.4Z" fill="#0000ff"/><path d="M764.5,577.6L766.7,579.8L764.5,582.0L762.3,579.8Z" fill="#0000ff"/><path d="M769.8,543.5L772.0,545.7L769.8,547.9L767.6,545.7Z" fill="#0000ff"/><path d="M740.6,575.3L742.8,577.5L740.6,579.7L738.4,577.5Z" fill="#0000ff"/><path d="M760.0,569.9L762.2,572.1L760.0,574.3L757.8,572.1Z" fill="#0000ff"/><path d="M747.1,574.7L749.3,576.9L747.1,579.1L744.9,576.9Z" fill="#0000ff"/><path d="M765.2,566.0L767.4,568.2L765.2,570.4L763.0,568.2Z" fill="#0000ff"/><path d="M738.9,572.5L741.1,574.7L738.9,576.9L736.7,574.7Z" fill="#0000ff"/><path d="M794.6,489.1L796.8,491.3L794.6,493.5L792.4,491.3Z" fill="#0000ff"/><path d="M794.8,502.8L797.0,505.0L794.8,507.2L792.6,505.0Z" fill="#0000ff"/><path d="M769.6,515.5L771.8,517.7L769.6,519.9L767.4,517.7Z" fill="#0000ff"/><path d="M740.6,557.3L742.8,559.5L740.6,561.7L738.4,559.5Z" fill="#0000ff"/><path d="M760.1,549.1L762.3,551.3L760.1,553.5L757.9,551.3Z" fill="#0000ff"/><path d="M799.1,486.4L801.3,488.6L799.1,490.8L796.9,488.6Z" fill="#0000ff"/><path d="M745.2,572.8L747.4,575.0L745.2,577.2L743.0,575.0Z" fill="#0000ff"/><path d="M757.5,518.8L759.7,521.0L757.5,523.2L755.3,521.0Z" fill="#0000ff"/><path d="M759.3,570.9L761.5,573.1L759.3,575.3L757.1,573.1Z" fill="#0000ff"/><path d="M746.4,577.7L748.6,579.9L746.4,582.1L744.2,579.9Z" fill="#0000ff"/><path d="M743.7,577.7L745.9,579.9L743.7,582.1L741.5,579.9Z" fill="#0000ff"/><path d="M751.0,576.8L753.2,579.0L751.0,581.2L748.8,579.0Z" fill="#0000ff"/><path d="M765.9,555.9L768.1,558.1L765.9,560.3L763.7,558.1Z" fill="#0000ff"/><path d="M771.5,485.0L773.7,487.2L771.5,489.4L769.3,487.2Z" fill="#0000ff"/><path d="M747.2,569.8L749.4,572.0L747.2,574.2L745.0,572.0Z" fill="#0000ff"/><path d="M791.4,445.0L793.6,447.2L791.4,449.4L789.2,447.2Z" fill="#0000ff"/><path d="M754.1,546.0L756.3,548.2L754.1,550.4L751.9,548.2Z" fill="#0000ff"/><path d="M749.7,577.6L751.9,579.8L749.7,582.0L747.5,579.8Z" fill="#0000ff"/><path d="M808.1,431.6L810.3,433.8L808.1,436.0L805.9,433.8Z" fill="#0000ff"/><path d="M815.2,422.9L817.4,425.1L815.2,427.3L813.0,425.1Z" fill="#0000ff"/><path d="M797.9,472.4L800.1,474.6L797.9,476.8L795.7,474.6Z" fill="#0000ff"/><path d="M761.3,501.6L763.5,503.8L761.3,506.0L759.1,503.8Z" fill="#0000ff"/><path d="M776.7,496.0L778.9,498.2L776.7,500.4L774.5,498.2Z" fill="#0000ff"/><path d="M758.4,575.1L760.6,577.3L758.4,579.5L756.2,577.3Z" fill="#0000ff"/><path d="M743.0,577.7L745.2,579.9L743.0,582.1L740.8,579.9Z" fill="#0000ff"/><path d="M773.2,539.9L775.4,542.1L773.2,544.3L771.0,542.1Z" fill="#0000ff"/><path d="M757.1,529.8L759.3,532.0L757.1,534.2L754.9,532.0Z" fill="#0000ff"/><path d="M770.9,559.1L773.1,561.3L770.9,563.5L768.7,561.3Z" fill="#0000ff"/><path d="M737.1,575.7L739.3,577.9L737.1,580.1L734.9,577.9Z" fill="#0000ff"/><path d="M814.8,432.7L817.0,434.9L814.8,437.1L812.6,434.9Z" fill="#0000ff"/><path d="M771.1,522.2L773.3,524.4L771.1,526.6L768.9,524.4Z" fill="#0000ff"/><path d="M766.5,528.0L768.7,530.2L766.5,532.4L764.3,530.2Z" fill="#0000ff"/><path d="M760.7,532.3L762.9,534.5L760.7,536.7L758.5,534.5Z" fill="#0000ff"/><path d="M770.9,529.1L773.1,531.3L770.9,533.5L768.7,531.3Z" fill="#0000ff"/><path d="M775.4,480.9L777.6,483.1L775.4,485.3L773.2,483.1Z" fill="#0000ff"/><path d="M753.7,577.6L755.9,579.8L753.7,582.0L751.5,579.8Z" fill="#0000ff"/><path d="M745.8,564.7L748.0,566.9L745.8,569.1L743.6,566.9Z" fill="#0000ff"/><path d="M751.0,532.9L753.2,535.1L751.0,537.3L748.8,535.1Z" fill="#0000ff"/><path d="M748.3,577.6L750.5,579.8L748.3,582.0L746.1,579.8Z" fill="#0000ff"/><path d="M743.0,577.3L745.2,579.5L743.0,581.7L740.8,579.5Z" fill="#0000ff"/><path d="M758.2,542.9L760.4,545.1L758.2,547.3L756.0,545.1Z" fill="#0000ff"/><path d="M759.8,576.4L762.0,578.6L759.8,580.8L757.6,578.6Z" fill="#0000ff"/><path d="M765.3,572.2L767.5,574.4L765.3,576.6L763.1,574.4Z" fill="#0000ff"/><path d="M753.2,567.1L755.4,569.3L753.2,571.5L751.0,569.3Z" fill="#0000ff"/><path d="M744.5,560.3L746.7,562.5L744.5,564.7L742.3,562.5Z" fill="#0000ff"/><path d="M823.6,425.1L825.8,427.3L823.6,429.5L821.4,427.3Z" fill="#0000ff"/><path d="M804.8,445.3L807.0,447.5L804.8,449.7L802.6,447.5Z" fill="#0000ff"/><path d="M745.9,571.9L748.1,574.1L745.9,576.3L743.7,574.1Z" fill="#0000ff"/><path d="M761.4,577.1L763.6,579.3L761.4,581.5L759.2,579.3Z" fill="#0000ff"/><path d="M744.5,575.7L746.7,577.9L744.5,580.1L742.3,577.9Z" fill="#0000ff"/><path d="M744.4,559.8L746.6,562.0L744.4,564.2L742.2,562.0Z" fill="#0000ff"/><path d="M748.2,576.9L750.4,579.1L748.2,581.3L746.0,579.1Z" fill="#0000ff"/><path d="M738.9,564.7L741.1,566.9L738.9,569.1L736.7,566.9Z" fill="#0000ff"/><path d="M750.8,571.5L753.0,573.7L750.8,575.9L748.6,573.7Z" fill="#0000ff"/><path d="M813.8,429.0L816.0,431.2L813.8,433.4L811.6,431.2Z" fill="#0000ff"/><path d="M809.8,446.6L812.0,448.8L809.8,451.0L807.6,448.8Z" fill="#0000ff"/><path d="M756.6,577.6L758.8,579.8L756.6,582.0L754.4,579.8Z" fill="#0000ff"/><path d="M745.9,567.8L748.1,570.0L745.9,572.2L743.7,570.0Z" fill="#0000ff"/><path d="M782.3,474.0L784.5,476.2L782.3,478.4L780.1,476.2Z" fill="#0000ff"/><path d="M751.5,577.1L753.7,579.3L751.5,581.5L749.3,579.3Z" fill="#0000ff"/><path d="M753.3,577.7L755.5,579.9L753.3,582.1L751.1,579.9Z" fill="#0000ff"/><path d="M796.1,468.8L798.3,471.0L796.1,473.2L793.9,471.0Z" fill="#0000ff"/><path d="M740.6,566.5L742.8,568.7L740.6,570.9L738.4,568.7Z" fill="#0000ff"/><path d="M762.9,507.0L765.1,509.2L762.9,511.4L760.7,509.2Z" fill="#0000ff"/><path d="M783.5,489.8L785.7,492.0L783.5,494.2L781.3,492.0Z" fill="#0000ff"/><path d="M750.5,577.7L752.7,579.9L750.5,582.1L748.3,579.9Z" fill="#0000ff"/><path d="M754.0,544.4L756.2,546.6L754.0,548.8L751.8,546.6Z" fill="#0000ff"/><path d="M754.9,575.6L757.1,577.8L754.9,580.0L752.7,577.8Z" fill="#0000ff"/><path d="M762.2,550.9L764.4,553.1L762.2,555.3L760.0,553.1Z" fill="#0000ff"/><path d="M768.2,515.8L770.4,518.0L768.2,520.2L766.0,518.0Z" fill="#0000ff"/><path d="M788.8,515.9L791.0,518.1L788.8,520.3L786.6,518.1Z" fill="#0000ff"/><path d="M754.7,550.2L756.9,552.4L754.7,554.6L752.5,552.4Z" fill="#0000ff"/><path d="M773.1,527.2L775.3,529.4L773.1,531.6L770.9,529.4Z" fill="#0000ff"/><path d="M747.9,555.8L750.1,558.0L747.9,560.2L745.7,558.0Z" fill="#0000ff"/><path d="M754.0,548.3L756.2,550.5L754.0,552.7L751.8,550.5Z" fill="#0000ff"/><path d="M747.9,558.1L750.1,560.3L747.9,562.5L745.7,560.3Z" fill="#0000ff"/><path d="M771.8,530.8L774.0,533.0L771.8,535.2L769.6,533.0Z" fill="#0000ff"/><path d="M793.8,463.7L796.0,465.9L793.8,468.1L791.6,465.9Z" fill="#0000ff"/><path d="M755.5,561.4L757.7,563.6L755.5,565.8L753.3,563.6Z" fill="#0000ff"/><path d="M741.9,575.4L744.1,577.6L741.9,579.8L739.7,577.6Z" fill="#0000ff"/><path d="M744.0,576.4L746.2,578.6L744.0,580.8L741.8,578.6Z" fill="#0000ff"/><path d="M758.9,572.3L761.1,574.5L758.9,576.7L756.7,574.5Z" fill="#0000ff"/><path d="M788.0,454.0L790.2,456.2L788.0,458.4L785.8,456.2Z" fill="#0000ff"/><path d="M779.6,522.0L781.8,524.2L779.6,526.4L777.4,524.2Z" fill="#0000ff"/><path d="M748.9,570.2L751.1,572.4L748.9,574.6L746.7,572.4Z" fill="#0000ff"/><path d="M765.3,577.6L767.5,579.8L765.3,582.0L763.1,579.8Z" fill="#0000ff"/><path d="M769.9,508.6L772.1,510.8L769.9,513.0L767.7,510.8Z" fill="#0000ff"/><path d="M742.8,576.9L745.0,579.1L742.8,581.3L740.6,579.1Z" fill="#0000ff"/><path d="M793.5,486.8L795.7,489.0L793.5,491.2L791.3,489.0Z" fill="#0000ff"/><path d="M789.3,469.4L791.5,471.6L789.3,473.8L787.1,471.6Z" fill="#0000ff"/><path d="M754.2,567.4L756.4,569.6L754.2,571.8L752.0,569.6Z" fill="#0000ff"/><path d="M742.2,575.8L744.4,578.0L742.2,580.2L740.0,578.0Z" fill="#0000ff"/><path d="M741.3,577.2L743.5,579.4L741.3,581.6L739.1,579.4Z" fill="#0000ff"/><path d="M751.5,527.2L753.7,529.4L751.5,531.6L749.3,529.4Z" fill="#0000ff"/><path d="M754.5,515.4L756.7,517.6L754.5,519.8L752.3,517.6Z" fill="#0000ff"/><path d="M766.7,518.6L768.9,520.8L766.7,523.0L764.5,520.8Z" fill="#0000ff"/><path d="M752.7,571.4L754.9,573.6L752.7,575.8L750.5,573.6Z" fill="#0000ff"/><path d="M766.8,517.3L769.0,519.5L766.8,521.7L764.6,519.5Z" fill="#0000ff"/><path d="M755.1,549.2L757.3,551.4L755.1,553.6L752.9,551.4Z" fill="#0000ff"/><path d="M754.0,577.2L756.2,579.4L754.0,581.6L751.8,579.4Z" fill="#0000ff"/><path d="M810.5,429.5L812.7,431.7L810.5,433.9L808.3,431.7Z" fill="#0000ff"/><path d="M799.8,463.5L802.0,465.7L799.8,467.9L797.6,465.7Z" fill="#0000ff"/><path d="M795.9,438.8L798.1,441.0L795.9,443.2L793.7,441.0Z" fill="#0000ff"/><path d="M760.1,572.5L762.3,574.7L760.1,576.9L757.9,574.7Z" fill="#0000ff"/><path d="M743.6,568.4L745.8,570.6L743.6,572.8L741.4,570.6Z" fill="#0000ff"/><path d="M766.3,553.7L768.5,555.9L766.3,558.1L764.1,555.9Z" fill="#0000ff"/><path d="M739.0,564.8L741.2,567.0L739.0,569.2L736.8,567.0Z" fill="#0000ff"/><path d="M764.3,522.2L766.5,524.4L764.3,526.6L762.1,524.4Z" fill="#0000ff"/><path d="M753.7,576.6L755.9,578.8L753.7,581.0L751.5,578.8Z" fill="#0000ff"/><path d="M747.6,542.7L749.8,544.9L747.6,547.1L745.4,544.9Z" fill="#0000ff"/><path d="M783.5,496.4L785.7,498.6L783.5,500.8L781.3,498.6Z" fill="#0000ff"/><path d="M757.7,576.5L759.9,578.7L757.7,580.9L755.5,578.7Z" fill="#0000ff"/><path d="M745.2,577.6L747.4,579.8L745.2,582.0L743.0,579.8Z" fill="#0000ff"/><path d="M739.7,577.4L741.9,579.6L739.7,581.8L737.5,579.6Z" fill="#0000ff"/><path d="M738.3,558.2L740.5,560.4L738.3,562.6L736.1,560.4Z" fill="#0000ff"/><path d="M752.9,575.9L755.1,578.1L752.9,580.3L750.7,578.1Z" fill="#0000ff"/><path d="M744.6,577.6L746.8,579.8L744.6,582.0L742.4,579.8Z" fill="#0000ff"/><path d="M767.0,557.7L769.2,559.9L767.0,562.1L764.8,559.9Z" fill="#0000ff"/><path d="M739.7,575.9L741.9,578.1L739.7,580.3L737.5,578.1Z" fill="#0000ff"/><path d="M761.9,538.9L764.1,541.1L761.9,543.3L759.7,541.1Z" fill="#0000ff"/><path d="M758.7,560.9L760.9,563.1L758.7,565.3L756.5,563.1Z" fill="#0000ff"/><path d="M786.5,501.7L788.7,503.9L786.5,506.1L784.3,503.9Z" fill="#0000ff"/><path d="M766.8,550.1L769.0,552.3L766.8,554.5L764.6,552.3Z" fill="#0000ff"/><path d="M750.7,576.4L752.9,578.6L750.7,580.8L748.5,578.6Z" fill="#0000ff"/><path d="M771.5,536.5L773.7,538.7L771.5,540.9L769.3,538.7Z" fill="#0000ff"/><path d="M746.9,577.7L749.1,579.9L746.9,582.1L744.7,579.9Z" fill="#0000ff"/><path d="M744.8,577.2L747.0,579.4L744.8,581.6L742.6,579.4Z" fill="#0000ff"/><path d="M751.7,575.2L753.9,577.4L751.7,579.6L749.5,577.4Z" fill="#0000ff"/><path d="M759.9,577.5L762.1,579.7L759.9,581.9L757.7,579.7Z" fill="#0000ff"/><path d="M797.5,444.4L799.7,446.6L797.5,448.8L795.3,446.6Z" fill="#0000ff"/><path d="M772.3,538.0L774.5,540.2L772.3,542.4L770.1,540.2Z" fill="#0000ff"/><path d="M762.2,524.5L764.4,526.7L762.2,528.9L760.0,526.7Z" fill="#0000ff"/><path d="M752.5,577.5L754.7,579.7L752.5,581.9L750.3,579.7Z" fill="#0000ff"/><path d="M767.1,502.9L769.3,505.1L767.1,507.3L764.9,505.1Z" fill="#0000ff"/><path d="M756.6,575.7L758.8,577.9L756.6,580.1L754.4,577.9Z" fill="#0000ff"/><path d="M816.6,433.1L818.8,435.3L816.6,437.5L814.4,435.3Z" fill="#0000ff"/><path d="M749.4,547.8L751.6,550.0L749.4,552.2L747.2,550.0Z" fill="#0000ff"/><path d="M774.0,505.4L776.2,507.6L774.0,509.8L771.8,507.6Z" fill="#0000ff"/><path d="M748.1,577.1L750.3,579.3L748.1,581.5L745.9,579.3Z" fill="#0000ff"/><path d="M800.3,459.2L802.5,461.4L800.3,463.6L798.1,461.4Z" fill="#0000ff"/><path d="M742.4,576.0L744.6,578.2L742.4,580.4L740.2,578.2Z" fill="#0000ff"/><path d="M741.6,575.1L743.8,577.3L741.6,579.5L739.4,577.3Z" fill="#0000ff"/><path d="M769.6,533.8L771.8,536.0L769.6,538.2L767.4,536.0Z" fill="#0000ff"/><path d="M794.9,476.1L797.1,478.3L794.9,480.5L792.7,478.3Z" fill="#0000ff"/><path d="M739.4,570.4L741.6,572.6L739.4,574.8L737.2,572.6Z" fill="#0000ff"/><path d="M803.3,428.3L805.5,430.5L803.3,432.7L801.1,430.5Z" fill="#0000ff"/><path d="M742.1,577.6L744.3,579.8L742.1,582.0L739.9,579.8Z" fill="#0000ff"/><path d="M762.8,547.2L765.0,549.4L762.8,551.6L760.6,549.4Z" fill="#0000ff"/><path d="M775.9,527.7L778.1,529.9L775.9,532.1L773.7,529.9Z" fill="#0000ff"/><path d="M745.8,575.7L748.0,577.9L745.8,580.1L743.6,577.9Z" fill="#0000ff"/><path d="M746.4,577.7L748.6,579.9L746.4,582.1L744.2,579.9Z" fill="#0000ff"/><path d="M773.4,527.6L775.6,529.8L773.4,532.0L771.2,529.8Z" fill="#0000ff"/><path d="M747.2,577.0L749.4,579.2L747.2,581.4L745.0,579.2Z" fill="#0000ff"/><path d="M745.3,576.5L747.5,578.7L745.3,580.9L743.1,578.7Z" fill="#0000ff"/><path d="M751.8,577.7L754.0,579.9L751.8,582.1L749.6,579.9Z" fill="#0000ff"/><path d="M745.2,560.2L747.4,562.4L745.2,564.6L743.0,562.4Z" fill="#0000ff"/><path d="M736.7,577.7L738.9,579.9L736.7,582.1L734.5,579.9Z" fill="#0000ff"/><path d="M752.3,576.1L754.5,578.3L752.3,580.5L750.1,578.3Z" fill="#0000ff"/><path d="M772.9,539.2L775.1,541.4L772.9,543.6L770.7,541.4Z" fill="#0000ff"/><path d="M745.7,576.1L747.9,578.3L745.7,580.5L743.5,578.3Z" fill="#0000ff"/><path d="M742.3,576.2L744.5,578.4L742.3,580.6L740.1,578.4Z" fill="#0000ff"/><path d="M782.4,527.4L784.6,529.6L782.4,531.8L780.2,529.6Z" fill="#0000ff"/><path d="M765.0,526.1L767.2,528.3L765.0,530.5L762.8,528.3Z" fill="#0000ff"/><path d="M811.5,511.2L813.7,513.4L811.5,515.6L809.3,513.4Z" fill="#0000ff"/><path d="M832.7,443.4L834.9,445.6L832.7,447.8L830.5,445.6Z" fill="#0000ff"/><path d="M838.6,434.1L840.8,436.3L838.6,438.5L836.4,436.3Z" fill="#0000ff"/><path d="M825.9,424.7L828.1,426.9L825.9,429.1L823.7,426.9Z" fill="#0000ff"/><line x1="728.6" y1="600.7" x2="771.746" y2="423.4" stroke="#ff0000" stroke-width="1"/><line x1="728.6" y1="600.7" x2="831.389" y2="423.4" stroke="#00ff00" stroke-width="1"/><line x1="728.6" y1="600.7" x2="841.9639999999999" y2="423.4" stroke="#0000ff" stroke-width="1"/><line x1="728.6" y1="600.7" x2="849.578" y2="423.4" stroke="#0000ff" stroke-width="1" stroke-dasharray="4 3"/><path d="M729.1,423.4 L729.1,601.2 L897.8,601.2" stroke="#262626" fill="none" stroke-width="1"/><line x1="728.6" y1="601.2" x2="731.6" y2="601.2" stroke="#262626"/><line x1="729.1" y1="600.7" x2="729.1" y2="597.7" stroke="#262626"/><line x1="728.6" y1="556.9" x2="731.6" y2="556.9" stroke="#262626"/><line x1="771.4" y1="600.7" x2="771.4" y2="597.7" stroke="#262626"/><line x1="728.6" y1="512.5" x2="731.6" y2="512.5" stroke="#262626"/><line x1="813.7" y1="600.7" x2="813.7" y2="597.7" stroke="#262626"/><line x1="728.6" y1="468.2" x2="731.6" y2="468.2" stroke="#262626"/><line x1="856.0" y1="600.7" x2="856.0" y2="597.7" stroke="#262626"/><line x1="728.6" y1="423.9" x2="731.6" y2="423.9" stroke="#262626"/><line x1="898.3" y1="600.7" x2="898.3" y2="597.7" stroke="#262626"/></svg></div>
<div class="t" style="left:664.6px;width:60px;text-align:right;top:595.2px;font-size:10px;line-height:11px;letter-spacing:0">0</div>
<div class="t" style="left:698.6px;width:60px;text-align:center;top:604.7px;font-size:10px;line-height:11px;letter-spacing:0">0</div>
<div class="t" style="left:664.6px;width:60px;text-align:right;top:550.9px;font-size:10px;line-height:11px;letter-spacing:0">500</div>
<div class="t" style="left:740.9px;width:60px;text-align:center;top:604.7px;font-size:10px;line-height:11px;letter-spacing:0">500</div>
<div class="t" style="left:664.6px;width:60px;text-align:right;top:506.5px;font-size:10px;line-height:11px;letter-spacing:0">1000</div>
<div class="t" style="left:783.2px;width:60px;text-align:center;top:604.7px;font-size:10px;line-height:11px;letter-spacing:0">1000</div>
<div class="t" style="left:664.6px;width:60px;text-align:right;top:462.2px;font-size:10px;line-height:11px;letter-spacing:0">1500</div>
<div class="t" style="left:825.5px;width:60px;text-align:center;top:604.7px;font-size:10px;line-height:11px;letter-spacing:0">1500</div>
<div class="t" style="left:664.6px;width:60px;text-align:right;top:417.9px;font-size:10px;line-height:11px;letter-spacing:0">2000</div>
<div class="t" style="left:867.8px;width:60px;text-align:center;top:604.7px;font-size:10px;line-height:11px;letter-spacing:0">2000</div>
<div class="t" style="left:772px;width:80px;text-align:center;top:617px;font-size:10px;line-height:11px;letter-spacing:0">channel 2</div>
<div class="t" style="left:651px;width:80px;text-align:center;top:508.5px;font-size:10px;line-height:11px;letter-spacing:0;transform:rotate(-90deg)">channel 1</div>
<div class="fr" style="left:674px;top:646px;width:238px;height:61px"></div>
<div class="ft" style="left:684px;top:639px">Results</div>
<div class="t" style="top:650px;left:588px;width:300px;text-align:center;">ave Ch1</div>
<div class="t" style="top:650px;left:625px;width:300px;text-align:center;">ave Ch2</div>
<div class="t" style="top:650px;left:664px;width:300px;text-align:center;">ratio</div>
<div class="t" style="top:650px;left:702px;width:300px;text-align:center;">norm.</div>
<div class="t" style="top:650px;left:740px;width:300px;text-align:center;">calib.</div>
<div class="t" style="top:665px;left:688px;">Total</div>
<div class="t" style="top:688px;left:685px;">regression</div>
<div class="edd" style="left:721px;top:660px;width:32px;height:17px;line-height:15px;text-align:center">737.13</div>
<div class="edd" style="left:759px;top:660px;width:32px;height:17px;line-height:15px;text-align:center">433.51</div>
<div class="edd" style="left:798px;top:660px;width:32px;height:17px;line-height:15px;text-align:center">1.70</div>
<div class="edd" style="left:836px;top:660px;width:31px;height:17px;line-height:15px;text-align:center">0.17</div>
<div class="edd" style="left:874px;top:660px;width:32px;height:17px;line-height:15px;text-align:center">-338.37</div>
<div class="edd" style="left:759px;top:683px;width:32px;height:16px;line-height:14px;text-align:center">30.91</div>
<div class="edd" style="left:798px;top:683px;width:32px;height:16px;line-height:14px;text-align:center">1.62</div>
<div class="edd" style="left:836px;top:683px;width:31px;height:16px;line-height:14px;text-align:center">0.10</div>
<div class="edd" style="left:874px;top:683px;width:32px;height:16px;line-height:14px;text-align:center">-345</div>
<div class="fr" style="left:674px;top:714px;width:238px;height:39px"></div>
<div class="ft" style="left:684px;top:707px">Output</div>
<div class="btn" style="left:691px;top:722px;width:46px;height:23px;line-height:21px;">Process</div>
<div class="btnf" style="left:806px;top:722px;width:45px;height:23px;line-height:21px;">Panels</div>
<div class="btn" style="left:859px;top:722px;width:46px;height:23px;line-height:21px;">Close</div>
</body></html>
